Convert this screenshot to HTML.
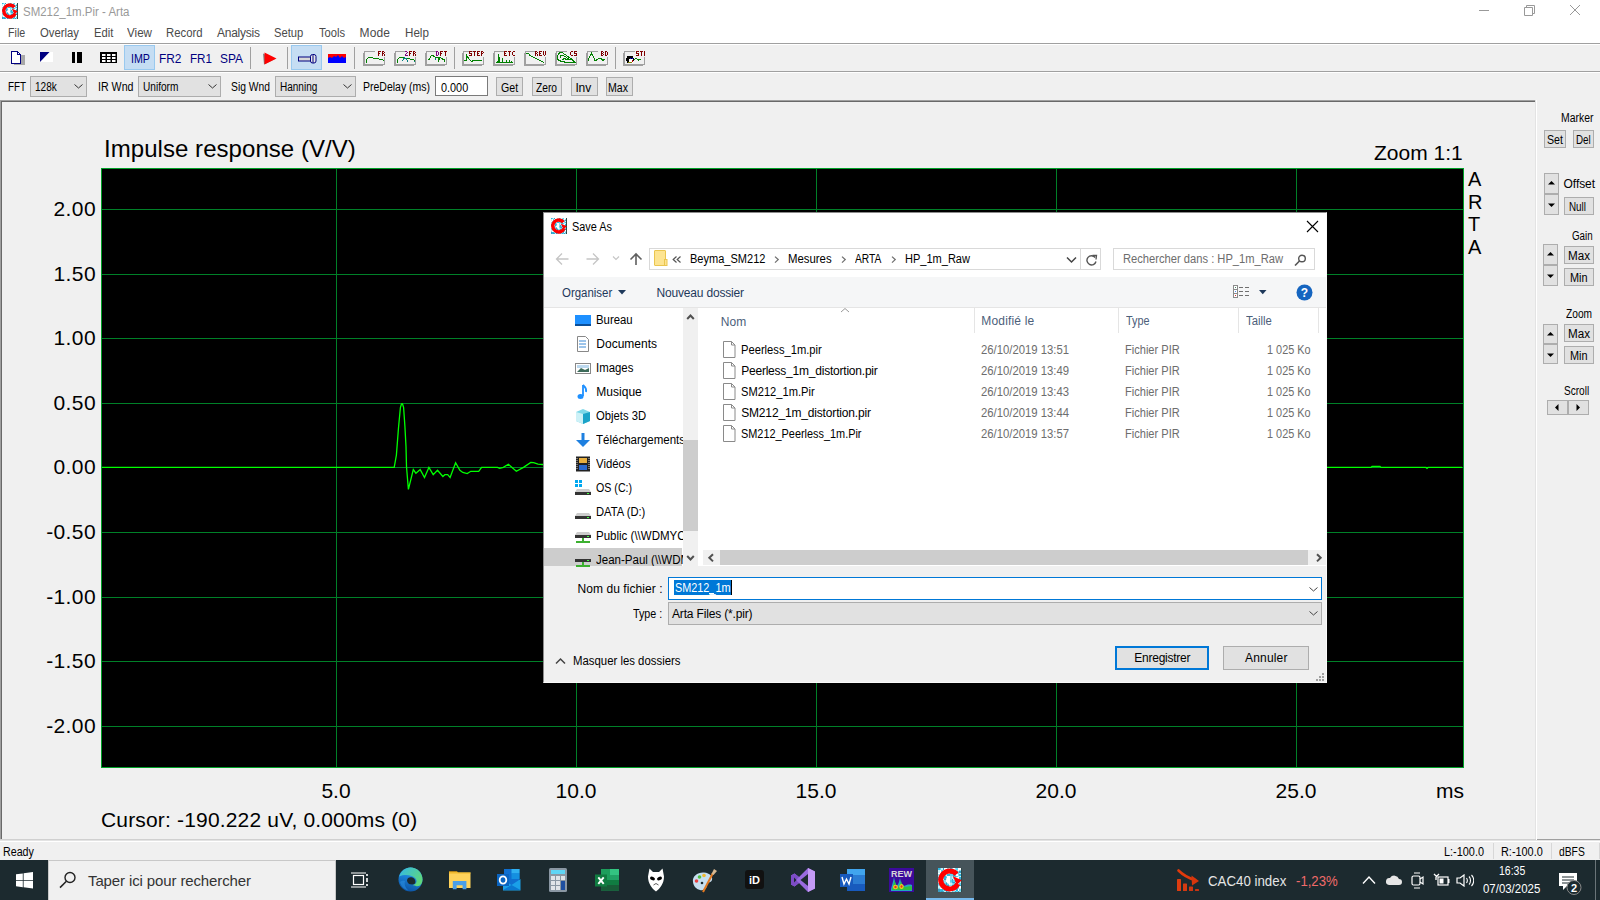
<!DOCTYPE html>
<html><head><meta charset="utf-8"><title>Arta</title><style>
*{box-sizing:border-box;margin:0;padding:0}
html,body{width:1600px;height:900px;overflow:hidden;background:#f0f0f0;font-family:"Liberation Sans",sans-serif;position:relative}
.a{position:absolute;white-space:nowrap}
.ui{font-size:12px;color:#000}
.btn{position:absolute;background:#e1e1e1;border:1px solid #adadad;font-size:12px;text-align:center;color:#000;white-space:nowrap}
.combo{position:absolute;background:#e1e1e1;border:1px solid #adadad;font-size:12px;color:#000;white-space:nowrap}
.pl{font-size:21px;color:#000;position:absolute;white-space:nowrap;line-height:24px}
.r{position:absolute}
</style></head><body>
<div class="r" style="left:0px;top:0px;width:1600px;height:43px;background:#fff;"></div>
<svg class="a" style="left:2px;top:3px;" width="16" height="16" viewBox="0 0 16 16"><g transform="scale(1.0)" shape-rendering="crispEdges"><rect x="0" y="0" width="1" height="1" fill="#2fb8e0"/><rect x="1" y="0" width="1" height="1" fill="#5fd3ee"/><rect x="2" y="0" width="1" height="1" fill="#c9f0f8"/><rect x="3" y="0" width="1" height="1" fill="#3a9cc0"/><rect x="4" y="0" width="1" height="1" fill="#ffffff"/><rect x="5" y="0" width="1" height="1" fill="#ffffff"/><rect x="6" y="0" width="1" height="1" fill="#8fdcec"/><rect x="7" y="0" width="1" height="1" fill="#ffffff"/><rect x="8" y="0" width="1" height="1" fill="#2fb8e0"/><rect x="9" y="0" width="1" height="1" fill="#8fdcec"/><rect x="10" y="0" width="1" height="1" fill="#ffffff"/><rect x="11" y="0" width="1" height="1" fill="#8fdcec"/><rect x="12" y="0" width="1" height="1" fill="#5fd3ee"/><rect x="13" y="0" width="1" height="1" fill="#ffffff"/><rect x="14" y="0" width="1" height="1" fill="#ffffff"/><rect x="15" y="0" width="1" height="1" fill="#c9f0f8"/><rect x="0" y="1" width="1" height="1" fill="#c9f0f8"/><rect x="1" y="1" width="1" height="1" fill="#ffffff"/><rect x="2" y="1" width="1" height="1" fill="#5fd3ee"/><rect x="3" y="1" width="1" height="1" fill="#ffffff"/><rect x="4" y="1" width="1" height="1" fill="#8fdcec"/><rect x="5" y="1" width="1" height="1" fill="#c9f0f8"/><rect x="6" y="1" width="1" height="1" fill="#ffffff"/><rect x="7" y="1" width="1" height="1" fill="#8fdcec"/><rect x="8" y="1" width="1" height="1" fill="#ffffff"/><rect x="9" y="1" width="1" height="1" fill="#5fd3ee"/><rect x="10" y="1" width="1" height="1" fill="#3a9cc0"/><rect x="11" y="1" width="1" height="1" fill="#3a9cc0"/><rect x="12" y="1" width="1" height="1" fill="#8fdcec"/><rect x="13" y="1" width="1" height="1" fill="#ffffff"/><rect x="14" y="1" width="1" height="1" fill="#8fdcec"/><rect x="15" y="1" width="1" height="1" fill="#8fdcec"/><rect x="0" y="2" width="1" height="1" fill="#c9f0f8"/><rect x="1" y="2" width="1" height="1" fill="#ffffff"/><rect x="2" y="2" width="1" height="1" fill="#5fd3ee"/><rect x="3" y="2" width="1" height="1" fill="#ffffff"/><rect x="4" y="2" width="1" height="1" fill="#8fdcec"/><rect x="5" y="2" width="1" height="1" fill="#5fd3ee"/><rect x="6" y="2" width="1" height="1" fill="#2fb8e0"/><rect x="7" y="2" width="1" height="1" fill="#c9f0f8"/><rect x="8" y="2" width="1" height="1" fill="#5fd3ee"/><rect x="9" y="2" width="1" height="1" fill="#8fdcec"/><rect x="10" y="2" width="1" height="1" fill="#ffffff"/><rect x="11" y="2" width="1" height="1" fill="#8fdcec"/><rect x="12" y="2" width="1" height="1" fill="#2fb8e0"/><rect x="13" y="2" width="1" height="1" fill="#8fdcec"/><rect x="14" y="2" width="1" height="1" fill="#3a9cc0"/><rect x="15" y="2" width="1" height="1" fill="#5fd3ee"/><rect x="0" y="3" width="1" height="1" fill="#ffffff"/><rect x="1" y="3" width="1" height="1" fill="#8fdcec"/><rect x="2" y="3" width="1" height="1" fill="#8fdcec"/><rect x="3" y="3" width="1" height="1" fill="#3a9cc0"/><rect x="4" y="3" width="1" height="1" fill="#5fd3ee"/><rect x="5" y="3" width="1" height="1" fill="#2fb8e0"/><rect x="6" y="3" width="1" height="1" fill="#ffffff"/><rect x="7" y="3" width="1" height="1" fill="#8fdcec"/><rect x="8" y="3" width="1" height="1" fill="#3a9cc0"/><rect x="9" y="3" width="1" height="1" fill="#ffffff"/><rect x="10" y="3" width="1" height="1" fill="#8fdcec"/><rect x="11" y="3" width="1" height="1" fill="#ffffff"/><rect x="12" y="3" width="1" height="1" fill="#8fdcec"/><rect x="13" y="3" width="1" height="1" fill="#5fd3ee"/><rect x="14" y="3" width="1" height="1" fill="#c9f0f8"/><rect x="15" y="3" width="1" height="1" fill="#3a9cc0"/><rect x="0" y="4" width="1" height="1" fill="#8fdcec"/><rect x="1" y="4" width="1" height="1" fill="#c9f0f8"/><rect x="2" y="4" width="1" height="1" fill="#2fb8e0"/><rect x="3" y="4" width="1" height="1" fill="#c9f0f8"/><rect x="4" y="4" width="1" height="1" fill="#8fdcec"/><rect x="5" y="4" width="1" height="1" fill="#c9f0f8"/><rect x="6" y="4" width="1" height="1" fill="#2fb8e0"/><rect x="7" y="4" width="1" height="1" fill="#2fb8e0"/><rect x="8" y="4" width="1" height="1" fill="#5fd3ee"/><rect x="9" y="4" width="1" height="1" fill="#5fd3ee"/><rect x="10" y="4" width="1" height="1" fill="#3a9cc0"/><rect x="11" y="4" width="1" height="1" fill="#5fd3ee"/><rect x="12" y="4" width="1" height="1" fill="#ffffff"/><rect x="13" y="4" width="1" height="1" fill="#8fdcec"/><rect x="14" y="4" width="1" height="1" fill="#2fb8e0"/><rect x="15" y="4" width="1" height="1" fill="#8fdcec"/><rect x="0" y="5" width="1" height="1" fill="#c9f0f8"/><rect x="1" y="5" width="1" height="1" fill="#2fb8e0"/><rect x="2" y="5" width="1" height="1" fill="#3a9cc0"/><rect x="3" y="5" width="1" height="1" fill="#c9f0f8"/><rect x="4" y="5" width="1" height="1" fill="#2fb8e0"/><rect x="5" y="5" width="1" height="1" fill="#8fdcec"/><rect x="6" y="5" width="1" height="1" fill="#ffffff"/><rect x="7" y="5" width="1" height="1" fill="#ffffff"/><rect x="8" y="5" width="1" height="1" fill="#8fdcec"/><rect x="9" y="5" width="1" height="1" fill="#c9f0f8"/><rect x="10" y="5" width="1" height="1" fill="#5fd3ee"/><rect x="11" y="5" width="1" height="1" fill="#2fb8e0"/><rect x="12" y="5" width="1" height="1" fill="#5fd3ee"/><rect x="13" y="5" width="1" height="1" fill="#c9f0f8"/><rect x="14" y="5" width="1" height="1" fill="#c9f0f8"/><rect x="15" y="5" width="1" height="1" fill="#ffffff"/><rect x="0" y="6" width="1" height="1" fill="#3a9cc0"/><rect x="1" y="6" width="1" height="1" fill="#ffffff"/><rect x="2" y="6" width="1" height="1" fill="#8fdcec"/><rect x="3" y="6" width="1" height="1" fill="#8fdcec"/><rect x="4" y="6" width="1" height="1" fill="#2fb8e0"/><rect x="5" y="6" width="1" height="1" fill="#2fb8e0"/><rect x="6" y="6" width="1" height="1" fill="#3a9cc0"/><rect x="7" y="6" width="1" height="1" fill="#2fb8e0"/><rect x="8" y="6" width="1" height="1" fill="#8fdcec"/><rect x="9" y="6" width="1" height="1" fill="#c9f0f8"/><rect x="10" y="6" width="1" height="1" fill="#8fdcec"/><rect x="11" y="6" width="1" height="1" fill="#c9f0f8"/><rect x="12" y="6" width="1" height="1" fill="#ffffff"/><rect x="13" y="6" width="1" height="1" fill="#ffffff"/><rect x="14" y="6" width="1" height="1" fill="#2fb8e0"/><rect x="15" y="6" width="1" height="1" fill="#c9f0f8"/><rect x="0" y="7" width="1" height="1" fill="#3a9cc0"/><rect x="1" y="7" width="1" height="1" fill="#3a9cc0"/><rect x="2" y="7" width="1" height="1" fill="#ffffff"/><rect x="3" y="7" width="1" height="1" fill="#ffffff"/><rect x="4" y="7" width="1" height="1" fill="#3a9cc0"/><rect x="5" y="7" width="1" height="1" fill="#3a9cc0"/><rect x="6" y="7" width="1" height="1" fill="#2fb8e0"/><rect x="7" y="7" width="1" height="1" fill="#3a9cc0"/><rect x="8" y="7" width="1" height="1" fill="#8fdcec"/><rect x="9" y="7" width="1" height="1" fill="#3a9cc0"/><rect x="10" y="7" width="1" height="1" fill="#c9f0f8"/><rect x="11" y="7" width="1" height="1" fill="#2fb8e0"/><rect x="12" y="7" width="1" height="1" fill="#3a9cc0"/><rect x="13" y="7" width="1" height="1" fill="#c9f0f8"/><rect x="14" y="7" width="1" height="1" fill="#3a9cc0"/><rect x="15" y="7" width="1" height="1" fill="#2fb8e0"/><rect x="0" y="8" width="1" height="1" fill="#ffffff"/><rect x="1" y="8" width="1" height="1" fill="#c9f0f8"/><rect x="2" y="8" width="1" height="1" fill="#2fb8e0"/><rect x="3" y="8" width="1" height="1" fill="#5fd3ee"/><rect x="4" y="8" width="1" height="1" fill="#8fdcec"/><rect x="5" y="8" width="1" height="1" fill="#ffffff"/><rect x="6" y="8" width="1" height="1" fill="#c9f0f8"/><rect x="7" y="8" width="1" height="1" fill="#ffffff"/><rect x="8" y="8" width="1" height="1" fill="#5fd3ee"/><rect x="9" y="8" width="1" height="1" fill="#2fb8e0"/><rect x="10" y="8" width="1" height="1" fill="#5fd3ee"/><rect x="11" y="8" width="1" height="1" fill="#3a9cc0"/><rect x="12" y="8" width="1" height="1" fill="#5fd3ee"/><rect x="13" y="8" width="1" height="1" fill="#c9f0f8"/><rect x="14" y="8" width="1" height="1" fill="#c9f0f8"/><rect x="15" y="8" width="1" height="1" fill="#c9f0f8"/><rect x="0" y="9" width="1" height="1" fill="#ffffff"/><rect x="1" y="9" width="1" height="1" fill="#5fd3ee"/><rect x="2" y="9" width="1" height="1" fill="#c9f0f8"/><rect x="3" y="9" width="1" height="1" fill="#c9f0f8"/><rect x="4" y="9" width="1" height="1" fill="#8fdcec"/><rect x="5" y="9" width="1" height="1" fill="#2fb8e0"/><rect x="6" y="9" width="1" height="1" fill="#5fd3ee"/><rect x="7" y="9" width="1" height="1" fill="#c9f0f8"/><rect x="8" y="9" width="1" height="1" fill="#8fdcec"/><rect x="9" y="9" width="1" height="1" fill="#2fb8e0"/><rect x="10" y="9" width="1" height="1" fill="#3a9cc0"/><rect x="11" y="9" width="1" height="1" fill="#c9f0f8"/><rect x="12" y="9" width="1" height="1" fill="#2fb8e0"/><rect x="13" y="9" width="1" height="1" fill="#3a9cc0"/><rect x="14" y="9" width="1" height="1" fill="#c9f0f8"/><rect x="15" y="9" width="1" height="1" fill="#5fd3ee"/><rect x="0" y="10" width="1" height="1" fill="#5fd3ee"/><rect x="1" y="10" width="1" height="1" fill="#ffffff"/><rect x="2" y="10" width="1" height="1" fill="#5fd3ee"/><rect x="3" y="10" width="1" height="1" fill="#5fd3ee"/><rect x="4" y="10" width="1" height="1" fill="#5fd3ee"/><rect x="5" y="10" width="1" height="1" fill="#3a9cc0"/><rect x="6" y="10" width="1" height="1" fill="#5fd3ee"/><rect x="7" y="10" width="1" height="1" fill="#ffffff"/><rect x="8" y="10" width="1" height="1" fill="#c9f0f8"/><rect x="9" y="10" width="1" height="1" fill="#8fdcec"/><rect x="10" y="10" width="1" height="1" fill="#5fd3ee"/><rect x="11" y="10" width="1" height="1" fill="#2fb8e0"/><rect x="12" y="10" width="1" height="1" fill="#2fb8e0"/><rect x="13" y="10" width="1" height="1" fill="#ffffff"/><rect x="14" y="10" width="1" height="1" fill="#5fd3ee"/><rect x="15" y="10" width="1" height="1" fill="#c9f0f8"/><rect x="0" y="11" width="1" height="1" fill="#8fdcec"/><rect x="1" y="11" width="1" height="1" fill="#2fb8e0"/><rect x="2" y="11" width="1" height="1" fill="#8fdcec"/><rect x="3" y="11" width="1" height="1" fill="#8fdcec"/><rect x="4" y="11" width="1" height="1" fill="#2fb8e0"/><rect x="5" y="11" width="1" height="1" fill="#5fd3ee"/><rect x="6" y="11" width="1" height="1" fill="#3a9cc0"/><rect x="7" y="11" width="1" height="1" fill="#8fdcec"/><rect x="8" y="11" width="1" height="1" fill="#8fdcec"/><rect x="9" y="11" width="1" height="1" fill="#3a9cc0"/><rect x="10" y="11" width="1" height="1" fill="#3a9cc0"/><rect x="11" y="11" width="1" height="1" fill="#3a9cc0"/><rect x="12" y="11" width="1" height="1" fill="#ffffff"/><rect x="13" y="11" width="1" height="1" fill="#c9f0f8"/><rect x="14" y="11" width="1" height="1" fill="#3a9cc0"/><rect x="15" y="11" width="1" height="1" fill="#8fdcec"/><rect x="0" y="12" width="1" height="1" fill="#c9f0f8"/><rect x="1" y="12" width="1" height="1" fill="#c9f0f8"/><rect x="2" y="12" width="1" height="1" fill="#c9f0f8"/><rect x="3" y="12" width="1" height="1" fill="#c9f0f8"/><rect x="4" y="12" width="1" height="1" fill="#ffffff"/><rect x="5" y="12" width="1" height="1" fill="#c9f0f8"/><rect x="6" y="12" width="1" height="1" fill="#3a9cc0"/><rect x="7" y="12" width="1" height="1" fill="#c9f0f8"/><rect x="8" y="12" width="1" height="1" fill="#ffffff"/><rect x="9" y="12" width="1" height="1" fill="#5fd3ee"/><rect x="10" y="12" width="1" height="1" fill="#ffffff"/><rect x="11" y="12" width="1" height="1" fill="#5fd3ee"/><rect x="12" y="12" width="1" height="1" fill="#c9f0f8"/><rect x="13" y="12" width="1" height="1" fill="#5fd3ee"/><rect x="14" y="12" width="1" height="1" fill="#ffffff"/><rect x="15" y="12" width="1" height="1" fill="#2fb8e0"/><rect x="0" y="13" width="1" height="1" fill="#8fdcec"/><rect x="1" y="13" width="1" height="1" fill="#ffffff"/><rect x="2" y="13" width="1" height="1" fill="#ffffff"/><rect x="3" y="13" width="1" height="1" fill="#ffffff"/><rect x="4" y="13" width="1" height="1" fill="#8fdcec"/><rect x="5" y="13" width="1" height="1" fill="#5fd3ee"/><rect x="6" y="13" width="1" height="1" fill="#8fdcec"/><rect x="7" y="13" width="1" height="1" fill="#ffffff"/><rect x="8" y="13" width="1" height="1" fill="#2fb8e0"/><rect x="9" y="13" width="1" height="1" fill="#8fdcec"/><rect x="10" y="13" width="1" height="1" fill="#ffffff"/><rect x="11" y="13" width="1" height="1" fill="#ffffff"/><rect x="12" y="13" width="1" height="1" fill="#5fd3ee"/><rect x="13" y="13" width="1" height="1" fill="#8fdcec"/><rect x="14" y="13" width="1" height="1" fill="#c9f0f8"/><rect x="15" y="13" width="1" height="1" fill="#5fd3ee"/><rect x="0" y="14" width="1" height="1" fill="#3a9cc0"/><rect x="1" y="14" width="1" height="1" fill="#2fb8e0"/><rect x="2" y="14" width="1" height="1" fill="#2fb8e0"/><rect x="3" y="14" width="1" height="1" fill="#8fdcec"/><rect x="4" y="14" width="1" height="1" fill="#2fb8e0"/><rect x="5" y="14" width="1" height="1" fill="#c9f0f8"/><rect x="6" y="14" width="1" height="1" fill="#ffffff"/><rect x="7" y="14" width="1" height="1" fill="#ffffff"/><rect x="8" y="14" width="1" height="1" fill="#c9f0f8"/><rect x="9" y="14" width="1" height="1" fill="#c9f0f8"/><rect x="10" y="14" width="1" height="1" fill="#c9f0f8"/><rect x="11" y="14" width="1" height="1" fill="#c9f0f8"/><rect x="12" y="14" width="1" height="1" fill="#2fb8e0"/><rect x="13" y="14" width="1" height="1" fill="#ffffff"/><rect x="14" y="14" width="1" height="1" fill="#5fd3ee"/><rect x="15" y="14" width="1" height="1" fill="#ffffff"/><rect x="0" y="15" width="1" height="1" fill="#3a9cc0"/><rect x="1" y="15" width="1" height="1" fill="#2fb8e0"/><rect x="2" y="15" width="1" height="1" fill="#3a9cc0"/><rect x="3" y="15" width="1" height="1" fill="#2fb8e0"/><rect x="4" y="15" width="1" height="1" fill="#c9f0f8"/><rect x="5" y="15" width="1" height="1" fill="#3a9cc0"/><rect x="6" y="15" width="1" height="1" fill="#5fd3ee"/><rect x="7" y="15" width="1" height="1" fill="#8fdcec"/><rect x="8" y="15" width="1" height="1" fill="#ffffff"/><rect x="9" y="15" width="1" height="1" fill="#5fd3ee"/><rect x="10" y="15" width="1" height="1" fill="#8fdcec"/><rect x="11" y="15" width="1" height="1" fill="#2fb8e0"/><rect x="12" y="15" width="1" height="1" fill="#5fd3ee"/><rect x="13" y="15" width="1" height="1" fill="#3a9cc0"/><rect x="14" y="15" width="1" height="1" fill="#8fdcec"/><rect x="15" y="15" width="1" height="1" fill="#ffffff"/><rect x="15" y="0" width="1" height="16" fill="#304848"/></g><g transform="scale(1.0)"><path d="M13.2 10.6A6 6 0 1 1 12.4 4.1" fill="none" stroke="#ff0000" stroke-width="3.4"/><path d="M9.8 5.4L15.8 8.2L12.6 11.4z" fill="#ff0000"/><path d="M8 5.4a2.6 2.6 0 0 0 0 5.2z" fill="#fff"/></g></svg>
<div class="a" style="left:23.00px;top:6.11px;font-size:12px;line-height:12px;color:#999;transform-origin:0.00px 0;transform:scaleX(0.9558);">SM212_1m.Pir - Arta</div>
<div class="r" style="left:1479px;top:10px;width:10px;height:1px;background:#999;"></div>
<svg class="a" style="left:1523px;top:4px" width="13" height="12"><path d="M1.5 3.5h8v8h-8z M3.5 3.5v-2h8v8h-2" fill="none" stroke="#999" stroke-width="1"/></svg>
<svg class="a" style="left:1569px;top:4px" width="12" height="12"><path d="M1 1L11 11M11 1L1 11" stroke="#999" stroke-width="1"/></svg>
<div class="a" style="left:7.70px;top:27.11px;font-size:12px;line-height:12px;color:#4a4a4a;transform-origin:0.00px 0;transform:scaleX(0.8903);">File</div>
<div class="a" style="left:39.80px;top:27.11px;font-size:12px;line-height:12px;color:#4a4a4a;transform-origin:0.00px 0;transform:scaleX(0.9410);">Overlay</div>
<div class="a" style="left:93.60px;top:27.11px;font-size:12px;line-height:12px;color:#4a4a4a;transform-origin:0.00px 0;transform:scaleX(0.9324);">Edit</div>
<div class="a" style="left:127.00px;top:27.11px;font-size:12px;line-height:12px;color:#4a4a4a;transform-origin:0.00px 0;transform:scaleX(0.9690);">View</div>
<div class="a" style="left:166.00px;top:27.11px;font-size:12px;line-height:12px;color:#4a4a4a;transform-origin:0.00px 0;transform:scaleX(0.9432);">Record</div>
<div class="a" style="left:217.00px;top:27.11px;font-size:12px;line-height:12px;color:#4a4a4a;letter-spacing:-0.243px;">Analysis</div>
<div class="a" style="left:274.00px;top:27.11px;font-size:12px;line-height:12px;color:#4a4a4a;transform-origin:0.00px 0;transform:scaleX(0.9337);">Setup</div>
<div class="a" style="left:318.50px;top:27.11px;font-size:12px;line-height:12px;color:#4a4a4a;transform-origin:0.00px 0;transform:scaleX(0.9315);">Tools</div>
<div class="a" style="left:359.60px;top:27.11px;font-size:12px;line-height:12px;color:#4a4a4a;letter-spacing:0.100px;">Mode</div>
<div class="a" style="left:404.50px;top:27.11px;font-size:12px;line-height:12px;color:#4a4a4a;transform-origin:0.00px 0;transform:scaleX(0.9692);">Help</div>
<div class="r" style="left:0px;top:43px;width:1600px;height:1px;background:#a0a0a0;"></div>
<div class="r" style="left:0px;top:44px;width:1600px;height:1px;background:#fff;"></div>
<div class="r" style="left:0px;top:71px;width:1600px;height:1px;background:#a0a0a0;"></div>
<div class="r" style="left:0px;top:72px;width:1600px;height:1px;background:#fff;"></div>
<div class="r" style="left:0px;top:100px;width:1536px;height:1px;background:#a0a0a0;"></div>
<div class="r" style="left:0px;top:101px;width:1536px;height:1px;background:#696969;"></div>
<div class="r" style="left:0px;top:101px;width:1px;height:738px;background:#a0a0a0;"></div>
<div class="r" style="left:1px;top:101px;width:1px;height:738px;background:#696969;"></div>
<div class="r" style="left:1535px;top:100px;width:1px;height:740px;background:#e3e3e3;"></div>
<div class="r" style="left:1536px;top:100px;width:1px;height:740px;background:#fff;"></div>
<svg class="a" style="left:11px;top:51px" width="15" height="15" shape-rendering="crispEdges"><rect x="3" y="4" width="11" height="10" fill="#a8a8a8"/><path d="M0.5 0.5h6l3 3v8.5h-9z" fill="#fff" stroke="#000080"/><path d="M6.5 0.5v3h3" fill="none" stroke="#000080"/></svg>
<svg class="a" style="left:40px;top:52px" width="14" height="11"><path d="M0 0h13v10h-13z" fill="#fff"/><path d="M0 0h9.5l-9.5 10z" fill="#000080"/></svg>
<div class="r" style="left:72px;top:52px;width:3px;height:11px;background:#000;"></div>
<div class="r" style="left:77px;top:52px;width:5px;height:11px;background:#000;"></div>
<svg class="a" style="left:100px;top:52px" width="18" height="12"><rect x="0" y="0" width="17" height="11" fill="#000"/><rect x="2" y="2" width="3.5" height="2" fill="#fff"/><rect x="2" y="5" width="3.5" height="2" fill="#fff"/><rect x="2" y="8" width="3.5" height="2" fill="#fff"/><rect x="7" y="2" width="3.5" height="2" fill="#fff"/><rect x="7" y="5" width="3.5" height="2" fill="#fff"/><rect x="7" y="8" width="3.5" height="2" fill="#fff"/><rect x="12" y="2" width="3.5" height="2" fill="#fff"/><rect x="12" y="5" width="3.5" height="2" fill="#fff"/><rect x="12" y="8" width="3.5" height="2" fill="#fff"/></svg>
<div class="r" style="left:124px;top:45px;width:31px;height:25px;background:#c5ddf3;border:1px solid #99c9ef"></div>
<div class="r" style="left:291px;top:45px;width:31px;height:25px;background:#c5ddf3;border:1px solid #99c9ef"></div>
<div class="a" style="left:131.00px;top:52.25px;font-size:13px;line-height:13px;color:#000080;transform-origin:0.00px 0;transform:scaleX(0.8211);">IMP</div>
<div class="a" style="left:158.50px;top:52.25px;font-size:13px;line-height:13px;color:#000080;transform-origin:0.00px 0;transform:scaleX(0.9158);">FR2</div>
<div class="a" style="left:190.00px;top:52.25px;font-size:13px;line-height:13px;color:#000080;transform-origin:0.00px 0;transform:scaleX(0.8954);">FR1</div>
<div class="a" style="left:220.00px;top:52.25px;font-size:13px;line-height:13px;color:#000080;transform-origin:0.00px 0;transform:scaleX(0.9167);">SPA</div>
<div class="r" style="left:250px;top:47px;width:1px;height:22px;background:#a0a0a0;"></div>
<svg class="a" style="left:262px;top:52px" width="15" height="13"><path d="M1 1.5l12 5.5l-11 5.5z" fill="#808080"/><path d="M2.5 0.5l12 6l-12 6z" fill="#f00"/></svg>
<div class="r" style="left:287px;top:47px;width:1px;height:22px;background:#a0a0a0;"></div>
<svg class="a" style="left:298px;top:54px" width="19" height="10"><rect x="0.5" y="3" width="12" height="4" fill="#d8d8d8" stroke="#000080" stroke-width="1"/><rect x="12.5" y="0.5" width="5.5" height="8.5" rx="2" fill="#e8e8e8" stroke="#000080" stroke-width="1"/><path d="M15 1v8" stroke="#000080"/></svg>
<svg class="a" style="left:328px;top:54px" width="19" height="10"><rect x="0" y="0" width="18" height="9" fill="#0000ff"/><path d="M0 0h18v3l-2 1l-2-2l-2 2l-2-3l-2 2l-2-1l-2 2l-2-1l-2 1z" fill="#f00"/></svg>
<div class="r" style="left:354px;top:47px;width:1px;height:22px;background:#a0a0a0;"></div>
<div class="r" style="left:454px;top:47px;width:1px;height:22px;background:#a0a0a0;"></div>
<div class="r" style="left:615px;top:47px;width:1px;height:22px;background:#a0a0a0;"></div>
<svg class="a" style="left:362px;top:49px" width="26" height="18"><g transform="translate(-362,-49)" shape-rendering="crispEdges"><rect x="364" y="51" width="11" height="1" fill="#a0a0a0"/><rect x="364" y="51" width="1" height="14" fill="#a0a0a0"/><rect x="363" y="53" width="1" height="13" fill="#a0a0a0"/><rect x="364" y="64" width="21" height="1" fill="#a0a0a0"/><rect x="363" y="65" width="20" height="1" fill="#a0a0a0"/><rect x="384" y="57" width="1" height="8" fill="#a0a0a0"/><rect x="378" y="51" width="1" height="1" fill="#800000"/><rect x="379" y="51" width="1" height="1" fill="#800000"/><rect x="380" y="51" width="1" height="1" fill="#800000"/><rect x="378" y="52" width="1" height="1" fill="#800000"/><rect x="378" y="53" width="1" height="1" fill="#800000"/><rect x="379" y="53" width="1" height="1" fill="#800000"/><rect x="378" y="54" width="1" height="1" fill="#800000"/><rect x="378" y="55" width="1" height="1" fill="#800000"/><rect x="382" y="51" width="1" height="1" fill="#800000"/><rect x="383" y="51" width="1" height="1" fill="#800000"/><rect x="382" y="52" width="1" height="1" fill="#800000"/><rect x="384" y="52" width="1" height="1" fill="#800000"/><rect x="382" y="53" width="1" height="1" fill="#800000"/><rect x="383" y="53" width="1" height="1" fill="#800000"/><rect x="382" y="54" width="1" height="1" fill="#800000"/><rect x="384" y="54" width="1" height="1" fill="#800000"/><rect x="382" y="55" width="1" height="1" fill="#800000"/><rect x="384" y="55" width="1" height="1" fill="#800000"/><path d="M3.5 14.5V11.5L5.5 9.5H9.5L10.5 10.5H15.5L16.5 11.5H19.5L21 12.5" transform="translate(363,48)" fill="none" stroke="#008000" stroke-width="1"/></g></svg>
<svg class="a" style="left:393px;top:49px" width="26" height="18"><g transform="translate(-393,-49)" shape-rendering="crispEdges"><rect x="395" y="51" width="11" height="1" fill="#a0a0a0"/><rect x="395" y="51" width="1" height="14" fill="#a0a0a0"/><rect x="394" y="53" width="1" height="13" fill="#a0a0a0"/><rect x="395" y="64" width="21" height="1" fill="#a0a0a0"/><rect x="394" y="65" width="20" height="1" fill="#a0a0a0"/><rect x="415" y="57" width="1" height="8" fill="#a0a0a0"/><rect x="405" y="51" width="1" height="1" fill="#800080"/><rect x="406" y="51" width="1" height="1" fill="#800080"/><rect x="407" y="52" width="1" height="1" fill="#800080"/><rect x="406" y="53" width="1" height="1" fill="#800080"/><rect x="405" y="54" width="1" height="1" fill="#800080"/><rect x="405" y="55" width="1" height="1" fill="#800080"/><rect x="406" y="55" width="1" height="1" fill="#800080"/><rect x="407" y="55" width="1" height="1" fill="#800080"/><rect x="409" y="51" width="1" height="1" fill="#800000"/><rect x="410" y="51" width="1" height="1" fill="#800000"/><rect x="411" y="51" width="1" height="1" fill="#800000"/><rect x="409" y="52" width="1" height="1" fill="#800000"/><rect x="409" y="53" width="1" height="1" fill="#800000"/><rect x="410" y="53" width="1" height="1" fill="#800000"/><rect x="409" y="54" width="1" height="1" fill="#800000"/><rect x="409" y="55" width="1" height="1" fill="#800000"/><rect x="413" y="51" width="1" height="1" fill="#800000"/><rect x="414" y="51" width="1" height="1" fill="#800000"/><rect x="413" y="52" width="1" height="1" fill="#800000"/><rect x="415" y="52" width="1" height="1" fill="#800000"/><rect x="413" y="53" width="1" height="1" fill="#800000"/><rect x="414" y="53" width="1" height="1" fill="#800000"/><rect x="413" y="54" width="1" height="1" fill="#800000"/><rect x="415" y="54" width="1" height="1" fill="#800000"/><rect x="413" y="55" width="1" height="1" fill="#800000"/><rect x="415" y="55" width="1" height="1" fill="#800000"/><path d="M3.5 14.5V11.5L5.5 9.5H9.5L10.5 10.5H15.5L16.5 11.5H19.5L21 12.5" transform="translate(394,48)" fill="none" stroke="#008000" stroke-width="1"/><path d="M7.5 13.5L9.5 11.5L10.5 9.5L12 10.5L14 13.5M20.5 12.5V13.5" transform="translate(394,48)" fill="none" stroke="#008080" stroke-width="1"/></g></svg>
<svg class="a" style="left:424px;top:49px" width="26" height="18"><g transform="translate(-424,-49)" shape-rendering="crispEdges"><rect x="426" y="51" width="11" height="1" fill="#a0a0a0"/><rect x="426" y="51" width="1" height="14" fill="#a0a0a0"/><rect x="425" y="53" width="1" height="13" fill="#a0a0a0"/><rect x="426" y="64" width="21" height="1" fill="#a0a0a0"/><rect x="425" y="65" width="20" height="1" fill="#a0a0a0"/><rect x="446" y="57" width="1" height="8" fill="#a0a0a0"/><rect x="436" y="51" width="1" height="1" fill="#800080"/><rect x="437" y="51" width="1" height="1" fill="#800080"/><rect x="436" y="52" width="1" height="1" fill="#800080"/><rect x="438" y="52" width="1" height="1" fill="#800080"/><rect x="436" y="53" width="1" height="1" fill="#800080"/><rect x="438" y="53" width="1" height="1" fill="#800080"/><rect x="436" y="54" width="1" height="1" fill="#800080"/><rect x="438" y="54" width="1" height="1" fill="#800080"/><rect x="436" y="55" width="1" height="1" fill="#800080"/><rect x="437" y="55" width="1" height="1" fill="#800080"/><rect x="440" y="51" width="1" height="1" fill="#800000"/><rect x="441" y="51" width="1" height="1" fill="#800000"/><rect x="442" y="51" width="1" height="1" fill="#800000"/><rect x="440" y="52" width="1" height="1" fill="#800000"/><rect x="440" y="53" width="1" height="1" fill="#800000"/><rect x="441" y="53" width="1" height="1" fill="#800000"/><rect x="440" y="54" width="1" height="1" fill="#800000"/><rect x="440" y="55" width="1" height="1" fill="#800000"/><rect x="444" y="51" width="1" height="1" fill="#800000"/><rect x="445" y="51" width="1" height="1" fill="#800000"/><rect x="446" y="51" width="1" height="1" fill="#800000"/><rect x="445" y="52" width="1" height="1" fill="#800000"/><rect x="445" y="53" width="1" height="1" fill="#800000"/><rect x="445" y="54" width="1" height="1" fill="#800000"/><rect x="445" y="55" width="1" height="1" fill="#800000"/><path d="M3.5 12.5L6 8L8 7.5L10 9L10.5 9.5L13 9.5L13.5 12.5L15 9.5L17.5 11L19 11L19.5 13L18.5 14.5" transform="translate(425,48)" fill="none" stroke="#008000" stroke-width="1"/><path d="M10.5 9.5V12" transform="translate(425,48)" fill="none" stroke="#008080" stroke-width="1"/></g></svg>
<svg class="a" style="left:461px;top:49px" width="26" height="18"><g transform="translate(-461,-49)" shape-rendering="crispEdges"><rect x="463" y="51" width="11" height="1" fill="#a0a0a0"/><rect x="463" y="51" width="1" height="14" fill="#a0a0a0"/><rect x="462" y="53" width="1" height="13" fill="#a0a0a0"/><rect x="463" y="64" width="21" height="1" fill="#a0a0a0"/><rect x="462" y="65" width="20" height="1" fill="#a0a0a0"/><rect x="483" y="57" width="1" height="8" fill="#a0a0a0"/><rect x="469" y="51" width="1" height="1" fill="#800000"/><rect x="470" y="51" width="1" height="1" fill="#800000"/><rect x="471" y="51" width="1" height="1" fill="#800000"/><rect x="469" y="52" width="1" height="1" fill="#800000"/><rect x="469" y="53" width="1" height="1" fill="#800000"/><rect x="470" y="53" width="1" height="1" fill="#800000"/><rect x="471" y="53" width="1" height="1" fill="#800000"/><rect x="471" y="54" width="1" height="1" fill="#800000"/><rect x="469" y="55" width="1" height="1" fill="#800000"/><rect x="470" y="55" width="1" height="1" fill="#800000"/><rect x="471" y="55" width="1" height="1" fill="#800000"/><rect x="473" y="51" width="1" height="1" fill="#800000"/><rect x="474" y="51" width="1" height="1" fill="#800000"/><rect x="475" y="51" width="1" height="1" fill="#800000"/><rect x="474" y="52" width="1" height="1" fill="#800000"/><rect x="474" y="53" width="1" height="1" fill="#800000"/><rect x="474" y="54" width="1" height="1" fill="#800000"/><rect x="474" y="55" width="1" height="1" fill="#800000"/><rect x="477" y="51" width="1" height="1" fill="#800000"/><rect x="478" y="51" width="1" height="1" fill="#800000"/><rect x="479" y="51" width="1" height="1" fill="#800000"/><rect x="477" y="52" width="1" height="1" fill="#800000"/><rect x="477" y="53" width="1" height="1" fill="#800000"/><rect x="478" y="53" width="1" height="1" fill="#800000"/><rect x="477" y="54" width="1" height="1" fill="#800000"/><rect x="477" y="55" width="1" height="1" fill="#800000"/><rect x="478" y="55" width="1" height="1" fill="#800000"/><rect x="479" y="55" width="1" height="1" fill="#800000"/><rect x="481" y="51" width="1" height="1" fill="#800000"/><rect x="482" y="51" width="1" height="1" fill="#800000"/><rect x="481" y="52" width="1" height="1" fill="#800000"/><rect x="483" y="52" width="1" height="1" fill="#800000"/><rect x="481" y="53" width="1" height="1" fill="#800000"/><rect x="482" y="53" width="1" height="1" fill="#800000"/><rect x="481" y="54" width="1" height="1" fill="#800000"/><rect x="481" y="55" width="1" height="1" fill="#800000"/><path d="M2 12.5H4.5V6M4.5 7.5L6 9.5L7.5 11.5L9 13H10.5L11.5 12.5H19.5" transform="translate(462,48)" fill="none" stroke="#008000" stroke-width="1"/></g></svg>
<svg class="a" style="left:492px;top:49px" width="26" height="18"><g transform="translate(-492,-49)" shape-rendering="crispEdges"><rect x="494" y="51" width="11" height="1" fill="#a0a0a0"/><rect x="494" y="51" width="1" height="14" fill="#a0a0a0"/><rect x="493" y="53" width="1" height="13" fill="#a0a0a0"/><rect x="494" y="64" width="21" height="1" fill="#a0a0a0"/><rect x="493" y="65" width="20" height="1" fill="#a0a0a0"/><rect x="514" y="57" width="1" height="8" fill="#a0a0a0"/><rect x="504" y="51" width="1" height="1" fill="#800000"/><rect x="505" y="51" width="1" height="1" fill="#800000"/><rect x="506" y="51" width="1" height="1" fill="#800000"/><rect x="504" y="52" width="1" height="1" fill="#800000"/><rect x="504" y="53" width="1" height="1" fill="#800000"/><rect x="505" y="53" width="1" height="1" fill="#800000"/><rect x="504" y="54" width="1" height="1" fill="#800000"/><rect x="504" y="55" width="1" height="1" fill="#800000"/><rect x="505" y="55" width="1" height="1" fill="#800000"/><rect x="506" y="55" width="1" height="1" fill="#800000"/><rect x="508" y="51" width="1" height="1" fill="#800000"/><rect x="509" y="51" width="1" height="1" fill="#800000"/><rect x="510" y="51" width="1" height="1" fill="#800000"/><rect x="509" y="52" width="1" height="1" fill="#800000"/><rect x="509" y="53" width="1" height="1" fill="#800000"/><rect x="509" y="54" width="1" height="1" fill="#800000"/><rect x="509" y="55" width="1" height="1" fill="#800000"/><rect x="513" y="51" width="1" height="1" fill="#800000"/><rect x="514" y="51" width="1" height="1" fill="#800000"/><rect x="512" y="52" width="1" height="1" fill="#800000"/><rect x="512" y="53" width="1" height="1" fill="#800000"/><rect x="512" y="54" width="1" height="1" fill="#800000"/><rect x="513" y="55" width="1" height="1" fill="#800000"/><rect x="514" y="55" width="1" height="1" fill="#800000"/><path d="M3 14.5H20M5.5 14.5V5.5M6.5 14.5V9M9.5 14.5V9.5M13.5 14.5V12M16.5 14.5V11.5M18.5 14.5V13M4.5 14L5.5 12" transform="translate(493,48)" fill="none" stroke="#008000" stroke-width="1"/></g></svg>
<svg class="a" style="left:523px;top:49px" width="26" height="18"><g transform="translate(-523,-49)" shape-rendering="crispEdges"><rect x="525" y="51" width="11" height="1" fill="#a0a0a0"/><rect x="525" y="51" width="1" height="14" fill="#a0a0a0"/><rect x="524" y="53" width="1" height="13" fill="#a0a0a0"/><rect x="525" y="64" width="21" height="1" fill="#a0a0a0"/><rect x="524" y="65" width="20" height="1" fill="#a0a0a0"/><rect x="545" y="57" width="1" height="8" fill="#a0a0a0"/><rect x="535" y="51" width="1" height="1" fill="#800000"/><rect x="536" y="51" width="1" height="1" fill="#800000"/><rect x="535" y="52" width="1" height="1" fill="#800000"/><rect x="537" y="52" width="1" height="1" fill="#800000"/><rect x="535" y="53" width="1" height="1" fill="#800000"/><rect x="536" y="53" width="1" height="1" fill="#800000"/><rect x="535" y="54" width="1" height="1" fill="#800000"/><rect x="537" y="54" width="1" height="1" fill="#800000"/><rect x="535" y="55" width="1" height="1" fill="#800000"/><rect x="537" y="55" width="1" height="1" fill="#800000"/><rect x="539" y="51" width="1" height="1" fill="#800000"/><rect x="540" y="51" width="1" height="1" fill="#800000"/><rect x="541" y="51" width="1" height="1" fill="#800000"/><rect x="539" y="52" width="1" height="1" fill="#800000"/><rect x="539" y="53" width="1" height="1" fill="#800000"/><rect x="540" y="53" width="1" height="1" fill="#800000"/><rect x="539" y="54" width="1" height="1" fill="#800000"/><rect x="539" y="55" width="1" height="1" fill="#800000"/><rect x="540" y="55" width="1" height="1" fill="#800000"/><rect x="541" y="55" width="1" height="1" fill="#800000"/><rect x="543" y="51" width="1" height="1" fill="#800000"/><rect x="545" y="51" width="1" height="1" fill="#800000"/><rect x="543" y="52" width="1" height="1" fill="#800000"/><rect x="545" y="52" width="1" height="1" fill="#800000"/><rect x="543" y="53" width="1" height="1" fill="#800000"/><rect x="545" y="53" width="1" height="1" fill="#800000"/><rect x="543" y="54" width="1" height="1" fill="#800000"/><rect x="545" y="54" width="1" height="1" fill="#800000"/><rect x="544" y="55" width="1" height="1" fill="#800000"/><path d="M2 5.5H4.5L6 7.5L8 8.5L10 9.5L12 10.5L14 11.5L16 12.5L18 13.5L20 14.5" transform="translate(524,48)" fill="none" stroke="#008000" stroke-width="1"/></g></svg>
<svg class="a" style="left:554px;top:49px" width="26" height="18"><g transform="translate(-554,-49)" shape-rendering="crispEdges"><rect x="556" y="51" width="11" height="1" fill="#a0a0a0"/><rect x="556" y="51" width="1" height="14" fill="#a0a0a0"/><rect x="555" y="53" width="1" height="13" fill="#a0a0a0"/><rect x="556" y="64" width="21" height="1" fill="#a0a0a0"/><rect x="555" y="65" width="20" height="1" fill="#a0a0a0"/><rect x="576" y="57" width="1" height="8" fill="#a0a0a0"/><rect x="571" y="51" width="1" height="1" fill="#800000"/><rect x="572" y="51" width="1" height="1" fill="#800000"/><rect x="570" y="52" width="1" height="1" fill="#800000"/><rect x="570" y="53" width="1" height="1" fill="#800000"/><rect x="570" y="54" width="1" height="1" fill="#800000"/><rect x="571" y="55" width="1" height="1" fill="#800000"/><rect x="572" y="55" width="1" height="1" fill="#800000"/><rect x="574" y="51" width="1" height="1" fill="#800000"/><rect x="575" y="51" width="1" height="1" fill="#800000"/><rect x="576" y="51" width="1" height="1" fill="#800000"/><rect x="574" y="52" width="1" height="1" fill="#800000"/><rect x="574" y="53" width="1" height="1" fill="#800000"/><rect x="575" y="53" width="1" height="1" fill="#800000"/><rect x="576" y="53" width="1" height="1" fill="#800000"/><rect x="576" y="54" width="1" height="1" fill="#800000"/><rect x="574" y="55" width="1" height="1" fill="#800000"/><rect x="575" y="55" width="1" height="1" fill="#800000"/><rect x="576" y="55" width="1" height="1" fill="#800000"/><path d="M2.5 10C2.5 6 4 4.5 6 4.5C8 4.5 10 6.5 12 8L16 10.5L19.5 14H9.5C6 13.5 2.5 12 2.5 10Z" transform="translate(555,48)" fill="none" stroke="#008000" stroke-width="1"/><path d="M5 10C5 8 6 7 7.5 7L11 9L15 12M7.5 12L9 10.5L12 11.5H16" transform="translate(555,48)" fill="none" stroke="#008000" stroke-width="1"/></g></svg>
<svg class="a" style="left:585px;top:49px" width="26" height="18"><g transform="translate(-585,-49)" shape-rendering="crispEdges"><rect x="587" y="51" width="11" height="1" fill="#a0a0a0"/><rect x="587" y="51" width="1" height="14" fill="#a0a0a0"/><rect x="586" y="53" width="1" height="13" fill="#a0a0a0"/><rect x="587" y="64" width="21" height="1" fill="#a0a0a0"/><rect x="586" y="65" width="20" height="1" fill="#a0a0a0"/><rect x="607" y="57" width="1" height="8" fill="#a0a0a0"/><rect x="601" y="51" width="1" height="1" fill="#800000"/><rect x="602" y="51" width="1" height="1" fill="#800000"/><rect x="601" y="52" width="1" height="1" fill="#800000"/><rect x="603" y="52" width="1" height="1" fill="#800000"/><rect x="601" y="53" width="1" height="1" fill="#800000"/><rect x="602" y="53" width="1" height="1" fill="#800000"/><rect x="601" y="54" width="1" height="1" fill="#800000"/><rect x="603" y="54" width="1" height="1" fill="#800000"/><rect x="601" y="55" width="1" height="1" fill="#800000"/><rect x="602" y="55" width="1" height="1" fill="#800000"/><rect x="605" y="51" width="1" height="1" fill="#800000"/><rect x="606" y="51" width="1" height="1" fill="#800000"/><rect x="605" y="52" width="1" height="1" fill="#800000"/><rect x="607" y="52" width="1" height="1" fill="#800000"/><rect x="605" y="53" width="1" height="1" fill="#800000"/><rect x="607" y="53" width="1" height="1" fill="#800000"/><rect x="605" y="54" width="1" height="1" fill="#800000"/><rect x="607" y="54" width="1" height="1" fill="#800000"/><rect x="605" y="55" width="1" height="1" fill="#800000"/><rect x="606" y="55" width="1" height="1" fill="#800000"/><path d="M2 12.5L3.5 9L5.5 5.5L7.5 9L9 12.5L10.5 12L12 11L14 10.5L15.5 11L17 12.5L19.5 10.5" transform="translate(586,48)" fill="none" stroke="#008000" stroke-width="1"/></g></svg>
<svg class="a" style="left:622px;top:49px" width="26" height="18"><g transform="translate(-622,-49)" shape-rendering="crispEdges"><rect x="624" y="51" width="11" height="1" fill="#a0a0a0"/><rect x="624" y="51" width="1" height="14" fill="#a0a0a0"/><rect x="623" y="53" width="1" height="13" fill="#a0a0a0"/><rect x="624" y="64" width="21" height="1" fill="#a0a0a0"/><rect x="623" y="65" width="20" height="1" fill="#a0a0a0"/><rect x="644" y="57" width="1" height="8" fill="#a0a0a0"/><rect x="636" y="51" width="1" height="1" fill="#800000"/><rect x="637" y="51" width="1" height="1" fill="#800000"/><rect x="638" y="51" width="1" height="1" fill="#800000"/><rect x="636" y="52" width="1" height="1" fill="#800000"/><rect x="636" y="53" width="1" height="1" fill="#800000"/><rect x="637" y="53" width="1" height="1" fill="#800000"/><rect x="638" y="53" width="1" height="1" fill="#800000"/><rect x="638" y="54" width="1" height="1" fill="#800000"/><rect x="636" y="55" width="1" height="1" fill="#800000"/><rect x="637" y="55" width="1" height="1" fill="#800000"/><rect x="638" y="55" width="1" height="1" fill="#800000"/><rect x="640" y="51" width="1" height="1" fill="#800000"/><rect x="641" y="51" width="1" height="1" fill="#800000"/><rect x="642" y="51" width="1" height="1" fill="#800000"/><rect x="641" y="52" width="1" height="1" fill="#800000"/><rect x="641" y="53" width="1" height="1" fill="#800000"/><rect x="641" y="54" width="1" height="1" fill="#800000"/><rect x="641" y="55" width="1" height="1" fill="#800000"/><rect x="644" y="51" width="1" height="1" fill="#800000"/><rect x="644" y="52" width="1" height="1" fill="#800000"/><rect x="644" y="53" width="1" height="1" fill="#800000"/><rect x="644" y="54" width="1" height="1" fill="#800000"/><rect x="644" y="55" width="1" height="1" fill="#800000"/><path d="M11 12L12.5 10.5L14 11L15.5 12L17 11.5L18.5 10.5" transform="translate(623,48)" fill="none" stroke="#008000" stroke-width="1"/><circle cx="630" cy="59.5" r="3.8" fill="#000"/><path d="M629 58.5h4v4h-4z" fill="#fff"/><path d="M628 62.5h4" stroke="#808000"/><rect x="630" y="58" width="1" height="1" fill="#0000ff"/><rect x="632" y="58" width="1" height="1" fill="#0000ff"/><rect x="632" y="60" width="1" height="2" fill="#c00000"/></g></svg>
<div class="a" style="left:8.40px;top:81.11px;font-size:12px;line-height:12px;color:#000;transform-origin:0.00px 0;transform:scaleX(0.8220);">FFT</div>
<div class="combo" style="left:30px;top:76px;width:57px;height:21px"></div>
<div class="a" style="left:35.00px;top:81.11px;font-size:12px;line-height:12px;color:#000;transform-origin:0.00px 0;transform:scaleX(0.8391);">128k</div>
<svg class="a" style="left:74px;top:84px" width="9" height="5"><path d="M0.5 0.5L4.5 4L8.5 0.5" fill="none" stroke="#333" stroke-width="1"/></svg>
<div class="a" style="left:97.50px;top:81.11px;font-size:12px;line-height:12px;color:#000;transform-origin:0.00px 0;transform:scaleX(0.8871);">IR Wnd</div>
<div class="combo" style="left:138px;top:76px;width:83px;height:21px"></div>
<div class="a" style="left:143.00px;top:81.11px;font-size:12px;line-height:12px;color:#000;transform-origin:0.00px 0;transform:scaleX(0.8429);">Uniform</div>
<svg class="a" style="left:208px;top:84px" width="9" height="5"><path d="M0.5 0.5L4.5 4L8.5 0.5" fill="none" stroke="#333" stroke-width="1"/></svg>
<div class="a" style="left:231.00px;top:81.11px;font-size:12px;line-height:12px;color:#000;transform-origin:0.00px 0;transform:scaleX(0.8598);">Sig Wnd</div>
<div class="combo" style="left:275px;top:76px;width:81px;height:21px"></div>
<div class="a" style="left:280.00px;top:81.11px;font-size:12px;line-height:12px;color:#000;transform-origin:0.00px 0;transform:scaleX(0.8345);">Hanning</div>
<svg class="a" style="left:343px;top:84px" width="9" height="5"><path d="M0.5 0.5L4.5 4L8.5 0.5" fill="none" stroke="#333" stroke-width="1"/></svg>
<div class="a" style="left:363.00px;top:81.11px;font-size:12px;line-height:12px;color:#000;transform-origin:0.00px 0;transform:scaleX(0.8738);">PreDelay (ms)</div>
<div class="r" style="left:435px;top:76px;width:53px;height:20px;background:#fff;border:1px solid #7a7a7a"></div>
<div class="a" style="left:440.80px;top:81.61px;font-size:12px;line-height:12px;color:#000;transform-origin:0.00px 0;transform:scaleX(0.9049);">0.000</div>
<div class="r" style="left:496px;top:77px;width:27px;height:19px;background:#e1e1e1;border:1px solid #adadad"></div>
<div class="a" style="left:500.60px;top:82.31px;font-size:12px;line-height:12px;color:#000;transform-origin:0.00px 0;transform:scaleX(0.8851);">Get</div>
<div class="r" style="left:532px;top:77px;width:30px;height:19px;background:#e1e1e1;border:1px solid #adadad"></div>
<div class="a" style="left:536.00px;top:82.31px;font-size:12px;line-height:12px;color:#000;transform-origin:0.00px 0;transform:scaleX(0.8516);">Zero</div>
<div class="r" style="left:571px;top:77px;width:27px;height:19px;background:#e1e1e1;border:1px solid #adadad"></div>
<div class="a" style="left:575.40px;top:82.31px;font-size:12px;line-height:12px;color:#000;letter-spacing:-0.110px;">Inv</div>
<div class="r" style="left:606px;top:77px;width:27px;height:19px;background:#e1e1e1;border:1px solid #adadad"></div>
<div class="a" style="left:608.20px;top:82.31px;font-size:12px;line-height:12px;color:#000;transform-origin:0.00px 0;transform:scaleX(0.8818);">Max</div>
<svg class="a" style="left:0;top:0" width="1600" height="900"><rect x="101.5" y="168.5" width="1362" height="599" fill="#000" stroke="#00a028" stroke-width="1"/><line x1="102" y1="209.5" x2="1463" y2="209.5" stroke="#008028" stroke-width="1"/><line x1="102" y1="274.5" x2="1463" y2="274.5" stroke="#008028" stroke-width="1"/><line x1="102" y1="338.5" x2="1463" y2="338.5" stroke="#008028" stroke-width="1"/><line x1="102" y1="403.5" x2="1463" y2="403.5" stroke="#008028" stroke-width="1"/><line x1="102" y1="467.5" x2="1463" y2="467.5" stroke="#008028" stroke-width="1"/><line x1="102" y1="532.5" x2="1463" y2="532.5" stroke="#008028" stroke-width="1"/><line x1="102" y1="597.5" x2="1463" y2="597.5" stroke="#008028" stroke-width="1"/><line x1="102" y1="661.5" x2="1463" y2="661.5" stroke="#008028" stroke-width="1"/><line x1="102" y1="726.5" x2="1463" y2="726.5" stroke="#008028" stroke-width="1"/><line x1="336.5" y1="169" x2="336.5" y2="767" stroke="#008028" stroke-width="1"/><line x1="576.5" y1="169" x2="576.5" y2="767" stroke="#008028" stroke-width="1"/><line x1="816.5" y1="169" x2="816.5" y2="767" stroke="#008028" stroke-width="1"/><line x1="1056.5" y1="169" x2="1056.5" y2="767" stroke="#008028" stroke-width="1"/><line x1="1296.5" y1="169" x2="1296.5" y2="767" stroke="#008028" stroke-width="1"/><path d="M102.0 467.4 L394.2 467.4 L396.4 455.1 L398.5 427.7 L400.4 407.5 L401.5 403.8 L402.5 403.8 L403.6 407.5 L404.9 426.2 L406.0 446.5 L406.5 466.7 L408.4 489.4 L413.3 469.6 L415.9 473.2 L420.2 469.6 L424.5 477.5 L428.9 467.4 L433.2 474.7 L437.5 470.3 L442.9 476.5 L444.8 474.7 L447.7 474.7 L450.1 477.5 L455.6 462.7 L459.9 470.3 L462.8 472.5 L467.2 473.6 L470.8 471.3 L478.7 471.3 L481.6 467.4 L497.5 467.4 L499.7 468.4 L503.3 467.4 L508.4 464.2 L516.3 471.3 L523.5 467.4 L530.8 462.4 L533.6 462.6 L538.0 464.2 L542.3 464.5 L600.0 467.4 L1371.0 467.4 L1372.0 466.5 L1380.0 466.5 L1381.0 467.4 L1426.0 467.4 L1427.0 468.3 L1428.0 467.4 L1462.0 467.4" fill="none" stroke="#00ff00" stroke-width="1.3"/></svg>
<div class="pl" style="right:1504px;top:196.5px;letter-spacing:0.4px">2.00</div>
<div class="pl" style="right:1504px;top:261.5px;letter-spacing:0.4px">1.50</div>
<div class="pl" style="right:1504px;top:325.5px;letter-spacing:0.4px">1.00</div>
<div class="pl" style="right:1504px;top:390.5px;letter-spacing:0.4px">0.50</div>
<div class="pl" style="right:1504px;top:454.5px;letter-spacing:0.4px">0.00</div>
<div class="pl" style="right:1504px;top:519.5px;letter-spacing:0.4px">-0.50</div>
<div class="pl" style="right:1504px;top:584.5px;letter-spacing:0.4px">-1.00</div>
<div class="pl" style="right:1504px;top:648.5px;letter-spacing:0.4px">-1.50</div>
<div class="pl" style="right:1504px;top:713.5px;letter-spacing:0.4px">-2.00</div>
<div class="pl" style="left:276px;width:120px;text-align:center;top:779px">5.0</div>
<div class="pl" style="left:516px;width:120px;text-align:center;top:779px">10.0</div>
<div class="pl" style="left:756px;width:120px;text-align:center;top:779px">15.0</div>
<div class="pl" style="left:996px;width:120px;text-align:center;top:779px">20.0</div>
<div class="pl" style="left:1236px;width:120px;text-align:center;top:779px">25.0</div>
<div class="pl" style="left:1436px;top:779px">ms</div>
<div class="pl" style="left:101px;top:808px;letter-spacing:0.17px">Cursor: -190.222 uV, 0.000ms (0)</div>
<div class="pl" style="left:104px;top:137px;font-size:24px;letter-spacing:0.05px">Impulse response (V/V)</div>
<div class="pl" style="left:1374px;top:140.5px">Zoom 1:1</div>
<div class="pl" style="left:1468px;top:168px;line-height:22.6px;font-size:20px">A<br>R<br>T<br>A</div>
<div class="r" style="left:543px;top:212px;width:784px;height:471px;background:#f0f0f0;border:1px solid #8c8c8c;border-right-color:#fafafa;border-bottom-color:#fafafa"></div>
<div class="r" style="left:544px;top:213px;width:782px;height:64px;background:#fff;"></div>
<svg class="a" style="left:551px;top:218px;" width="16" height="16" viewBox="0 0 16 16"><g transform="scale(1.0)" shape-rendering="crispEdges"><rect x="0" y="0" width="1" height="1" fill="#2fb8e0"/><rect x="1" y="0" width="1" height="1" fill="#5fd3ee"/><rect x="2" y="0" width="1" height="1" fill="#c9f0f8"/><rect x="3" y="0" width="1" height="1" fill="#3a9cc0"/><rect x="4" y="0" width="1" height="1" fill="#ffffff"/><rect x="5" y="0" width="1" height="1" fill="#ffffff"/><rect x="6" y="0" width="1" height="1" fill="#8fdcec"/><rect x="7" y="0" width="1" height="1" fill="#ffffff"/><rect x="8" y="0" width="1" height="1" fill="#2fb8e0"/><rect x="9" y="0" width="1" height="1" fill="#8fdcec"/><rect x="10" y="0" width="1" height="1" fill="#ffffff"/><rect x="11" y="0" width="1" height="1" fill="#8fdcec"/><rect x="12" y="0" width="1" height="1" fill="#5fd3ee"/><rect x="13" y="0" width="1" height="1" fill="#ffffff"/><rect x="14" y="0" width="1" height="1" fill="#ffffff"/><rect x="15" y="0" width="1" height="1" fill="#c9f0f8"/><rect x="0" y="1" width="1" height="1" fill="#c9f0f8"/><rect x="1" y="1" width="1" height="1" fill="#ffffff"/><rect x="2" y="1" width="1" height="1" fill="#5fd3ee"/><rect x="3" y="1" width="1" height="1" fill="#ffffff"/><rect x="4" y="1" width="1" height="1" fill="#8fdcec"/><rect x="5" y="1" width="1" height="1" fill="#c9f0f8"/><rect x="6" y="1" width="1" height="1" fill="#ffffff"/><rect x="7" y="1" width="1" height="1" fill="#8fdcec"/><rect x="8" y="1" width="1" height="1" fill="#ffffff"/><rect x="9" y="1" width="1" height="1" fill="#5fd3ee"/><rect x="10" y="1" width="1" height="1" fill="#3a9cc0"/><rect x="11" y="1" width="1" height="1" fill="#3a9cc0"/><rect x="12" y="1" width="1" height="1" fill="#8fdcec"/><rect x="13" y="1" width="1" height="1" fill="#ffffff"/><rect x="14" y="1" width="1" height="1" fill="#8fdcec"/><rect x="15" y="1" width="1" height="1" fill="#8fdcec"/><rect x="0" y="2" width="1" height="1" fill="#c9f0f8"/><rect x="1" y="2" width="1" height="1" fill="#ffffff"/><rect x="2" y="2" width="1" height="1" fill="#5fd3ee"/><rect x="3" y="2" width="1" height="1" fill="#ffffff"/><rect x="4" y="2" width="1" height="1" fill="#8fdcec"/><rect x="5" y="2" width="1" height="1" fill="#5fd3ee"/><rect x="6" y="2" width="1" height="1" fill="#2fb8e0"/><rect x="7" y="2" width="1" height="1" fill="#c9f0f8"/><rect x="8" y="2" width="1" height="1" fill="#5fd3ee"/><rect x="9" y="2" width="1" height="1" fill="#8fdcec"/><rect x="10" y="2" width="1" height="1" fill="#ffffff"/><rect x="11" y="2" width="1" height="1" fill="#8fdcec"/><rect x="12" y="2" width="1" height="1" fill="#2fb8e0"/><rect x="13" y="2" width="1" height="1" fill="#8fdcec"/><rect x="14" y="2" width="1" height="1" fill="#3a9cc0"/><rect x="15" y="2" width="1" height="1" fill="#5fd3ee"/><rect x="0" y="3" width="1" height="1" fill="#ffffff"/><rect x="1" y="3" width="1" height="1" fill="#8fdcec"/><rect x="2" y="3" width="1" height="1" fill="#8fdcec"/><rect x="3" y="3" width="1" height="1" fill="#3a9cc0"/><rect x="4" y="3" width="1" height="1" fill="#5fd3ee"/><rect x="5" y="3" width="1" height="1" fill="#2fb8e0"/><rect x="6" y="3" width="1" height="1" fill="#ffffff"/><rect x="7" y="3" width="1" height="1" fill="#8fdcec"/><rect x="8" y="3" width="1" height="1" fill="#3a9cc0"/><rect x="9" y="3" width="1" height="1" fill="#ffffff"/><rect x="10" y="3" width="1" height="1" fill="#8fdcec"/><rect x="11" y="3" width="1" height="1" fill="#ffffff"/><rect x="12" y="3" width="1" height="1" fill="#8fdcec"/><rect x="13" y="3" width="1" height="1" fill="#5fd3ee"/><rect x="14" y="3" width="1" height="1" fill="#c9f0f8"/><rect x="15" y="3" width="1" height="1" fill="#3a9cc0"/><rect x="0" y="4" width="1" height="1" fill="#8fdcec"/><rect x="1" y="4" width="1" height="1" fill="#c9f0f8"/><rect x="2" y="4" width="1" height="1" fill="#2fb8e0"/><rect x="3" y="4" width="1" height="1" fill="#c9f0f8"/><rect x="4" y="4" width="1" height="1" fill="#8fdcec"/><rect x="5" y="4" width="1" height="1" fill="#c9f0f8"/><rect x="6" y="4" width="1" height="1" fill="#2fb8e0"/><rect x="7" y="4" width="1" height="1" fill="#2fb8e0"/><rect x="8" y="4" width="1" height="1" fill="#5fd3ee"/><rect x="9" y="4" width="1" height="1" fill="#5fd3ee"/><rect x="10" y="4" width="1" height="1" fill="#3a9cc0"/><rect x="11" y="4" width="1" height="1" fill="#5fd3ee"/><rect x="12" y="4" width="1" height="1" fill="#ffffff"/><rect x="13" y="4" width="1" height="1" fill="#8fdcec"/><rect x="14" y="4" width="1" height="1" fill="#2fb8e0"/><rect x="15" y="4" width="1" height="1" fill="#8fdcec"/><rect x="0" y="5" width="1" height="1" fill="#c9f0f8"/><rect x="1" y="5" width="1" height="1" fill="#2fb8e0"/><rect x="2" y="5" width="1" height="1" fill="#3a9cc0"/><rect x="3" y="5" width="1" height="1" fill="#c9f0f8"/><rect x="4" y="5" width="1" height="1" fill="#2fb8e0"/><rect x="5" y="5" width="1" height="1" fill="#8fdcec"/><rect x="6" y="5" width="1" height="1" fill="#ffffff"/><rect x="7" y="5" width="1" height="1" fill="#ffffff"/><rect x="8" y="5" width="1" height="1" fill="#8fdcec"/><rect x="9" y="5" width="1" height="1" fill="#c9f0f8"/><rect x="10" y="5" width="1" height="1" fill="#5fd3ee"/><rect x="11" y="5" width="1" height="1" fill="#2fb8e0"/><rect x="12" y="5" width="1" height="1" fill="#5fd3ee"/><rect x="13" y="5" width="1" height="1" fill="#c9f0f8"/><rect x="14" y="5" width="1" height="1" fill="#c9f0f8"/><rect x="15" y="5" width="1" height="1" fill="#ffffff"/><rect x="0" y="6" width="1" height="1" fill="#3a9cc0"/><rect x="1" y="6" width="1" height="1" fill="#ffffff"/><rect x="2" y="6" width="1" height="1" fill="#8fdcec"/><rect x="3" y="6" width="1" height="1" fill="#8fdcec"/><rect x="4" y="6" width="1" height="1" fill="#2fb8e0"/><rect x="5" y="6" width="1" height="1" fill="#2fb8e0"/><rect x="6" y="6" width="1" height="1" fill="#3a9cc0"/><rect x="7" y="6" width="1" height="1" fill="#2fb8e0"/><rect x="8" y="6" width="1" height="1" fill="#8fdcec"/><rect x="9" y="6" width="1" height="1" fill="#c9f0f8"/><rect x="10" y="6" width="1" height="1" fill="#8fdcec"/><rect x="11" y="6" width="1" height="1" fill="#c9f0f8"/><rect x="12" y="6" width="1" height="1" fill="#ffffff"/><rect x="13" y="6" width="1" height="1" fill="#ffffff"/><rect x="14" y="6" width="1" height="1" fill="#2fb8e0"/><rect x="15" y="6" width="1" height="1" fill="#c9f0f8"/><rect x="0" y="7" width="1" height="1" fill="#3a9cc0"/><rect x="1" y="7" width="1" height="1" fill="#3a9cc0"/><rect x="2" y="7" width="1" height="1" fill="#ffffff"/><rect x="3" y="7" width="1" height="1" fill="#ffffff"/><rect x="4" y="7" width="1" height="1" fill="#3a9cc0"/><rect x="5" y="7" width="1" height="1" fill="#3a9cc0"/><rect x="6" y="7" width="1" height="1" fill="#2fb8e0"/><rect x="7" y="7" width="1" height="1" fill="#3a9cc0"/><rect x="8" y="7" width="1" height="1" fill="#8fdcec"/><rect x="9" y="7" width="1" height="1" fill="#3a9cc0"/><rect x="10" y="7" width="1" height="1" fill="#c9f0f8"/><rect x="11" y="7" width="1" height="1" fill="#2fb8e0"/><rect x="12" y="7" width="1" height="1" fill="#3a9cc0"/><rect x="13" y="7" width="1" height="1" fill="#c9f0f8"/><rect x="14" y="7" width="1" height="1" fill="#3a9cc0"/><rect x="15" y="7" width="1" height="1" fill="#2fb8e0"/><rect x="0" y="8" width="1" height="1" fill="#ffffff"/><rect x="1" y="8" width="1" height="1" fill="#c9f0f8"/><rect x="2" y="8" width="1" height="1" fill="#2fb8e0"/><rect x="3" y="8" width="1" height="1" fill="#5fd3ee"/><rect x="4" y="8" width="1" height="1" fill="#8fdcec"/><rect x="5" y="8" width="1" height="1" fill="#ffffff"/><rect x="6" y="8" width="1" height="1" fill="#c9f0f8"/><rect x="7" y="8" width="1" height="1" fill="#ffffff"/><rect x="8" y="8" width="1" height="1" fill="#5fd3ee"/><rect x="9" y="8" width="1" height="1" fill="#2fb8e0"/><rect x="10" y="8" width="1" height="1" fill="#5fd3ee"/><rect x="11" y="8" width="1" height="1" fill="#3a9cc0"/><rect x="12" y="8" width="1" height="1" fill="#5fd3ee"/><rect x="13" y="8" width="1" height="1" fill="#c9f0f8"/><rect x="14" y="8" width="1" height="1" fill="#c9f0f8"/><rect x="15" y="8" width="1" height="1" fill="#c9f0f8"/><rect x="0" y="9" width="1" height="1" fill="#ffffff"/><rect x="1" y="9" width="1" height="1" fill="#5fd3ee"/><rect x="2" y="9" width="1" height="1" fill="#c9f0f8"/><rect x="3" y="9" width="1" height="1" fill="#c9f0f8"/><rect x="4" y="9" width="1" height="1" fill="#8fdcec"/><rect x="5" y="9" width="1" height="1" fill="#2fb8e0"/><rect x="6" y="9" width="1" height="1" fill="#5fd3ee"/><rect x="7" y="9" width="1" height="1" fill="#c9f0f8"/><rect x="8" y="9" width="1" height="1" fill="#8fdcec"/><rect x="9" y="9" width="1" height="1" fill="#2fb8e0"/><rect x="10" y="9" width="1" height="1" fill="#3a9cc0"/><rect x="11" y="9" width="1" height="1" fill="#c9f0f8"/><rect x="12" y="9" width="1" height="1" fill="#2fb8e0"/><rect x="13" y="9" width="1" height="1" fill="#3a9cc0"/><rect x="14" y="9" width="1" height="1" fill="#c9f0f8"/><rect x="15" y="9" width="1" height="1" fill="#5fd3ee"/><rect x="0" y="10" width="1" height="1" fill="#5fd3ee"/><rect x="1" y="10" width="1" height="1" fill="#ffffff"/><rect x="2" y="10" width="1" height="1" fill="#5fd3ee"/><rect x="3" y="10" width="1" height="1" fill="#5fd3ee"/><rect x="4" y="10" width="1" height="1" fill="#5fd3ee"/><rect x="5" y="10" width="1" height="1" fill="#3a9cc0"/><rect x="6" y="10" width="1" height="1" fill="#5fd3ee"/><rect x="7" y="10" width="1" height="1" fill="#ffffff"/><rect x="8" y="10" width="1" height="1" fill="#c9f0f8"/><rect x="9" y="10" width="1" height="1" fill="#8fdcec"/><rect x="10" y="10" width="1" height="1" fill="#5fd3ee"/><rect x="11" y="10" width="1" height="1" fill="#2fb8e0"/><rect x="12" y="10" width="1" height="1" fill="#2fb8e0"/><rect x="13" y="10" width="1" height="1" fill="#ffffff"/><rect x="14" y="10" width="1" height="1" fill="#5fd3ee"/><rect x="15" y="10" width="1" height="1" fill="#c9f0f8"/><rect x="0" y="11" width="1" height="1" fill="#8fdcec"/><rect x="1" y="11" width="1" height="1" fill="#2fb8e0"/><rect x="2" y="11" width="1" height="1" fill="#8fdcec"/><rect x="3" y="11" width="1" height="1" fill="#8fdcec"/><rect x="4" y="11" width="1" height="1" fill="#2fb8e0"/><rect x="5" y="11" width="1" height="1" fill="#5fd3ee"/><rect x="6" y="11" width="1" height="1" fill="#3a9cc0"/><rect x="7" y="11" width="1" height="1" fill="#8fdcec"/><rect x="8" y="11" width="1" height="1" fill="#8fdcec"/><rect x="9" y="11" width="1" height="1" fill="#3a9cc0"/><rect x="10" y="11" width="1" height="1" fill="#3a9cc0"/><rect x="11" y="11" width="1" height="1" fill="#3a9cc0"/><rect x="12" y="11" width="1" height="1" fill="#ffffff"/><rect x="13" y="11" width="1" height="1" fill="#c9f0f8"/><rect x="14" y="11" width="1" height="1" fill="#3a9cc0"/><rect x="15" y="11" width="1" height="1" fill="#8fdcec"/><rect x="0" y="12" width="1" height="1" fill="#c9f0f8"/><rect x="1" y="12" width="1" height="1" fill="#c9f0f8"/><rect x="2" y="12" width="1" height="1" fill="#c9f0f8"/><rect x="3" y="12" width="1" height="1" fill="#c9f0f8"/><rect x="4" y="12" width="1" height="1" fill="#ffffff"/><rect x="5" y="12" width="1" height="1" fill="#c9f0f8"/><rect x="6" y="12" width="1" height="1" fill="#3a9cc0"/><rect x="7" y="12" width="1" height="1" fill="#c9f0f8"/><rect x="8" y="12" width="1" height="1" fill="#ffffff"/><rect x="9" y="12" width="1" height="1" fill="#5fd3ee"/><rect x="10" y="12" width="1" height="1" fill="#ffffff"/><rect x="11" y="12" width="1" height="1" fill="#5fd3ee"/><rect x="12" y="12" width="1" height="1" fill="#c9f0f8"/><rect x="13" y="12" width="1" height="1" fill="#5fd3ee"/><rect x="14" y="12" width="1" height="1" fill="#ffffff"/><rect x="15" y="12" width="1" height="1" fill="#2fb8e0"/><rect x="0" y="13" width="1" height="1" fill="#8fdcec"/><rect x="1" y="13" width="1" height="1" fill="#ffffff"/><rect x="2" y="13" width="1" height="1" fill="#ffffff"/><rect x="3" y="13" width="1" height="1" fill="#ffffff"/><rect x="4" y="13" width="1" height="1" fill="#8fdcec"/><rect x="5" y="13" width="1" height="1" fill="#5fd3ee"/><rect x="6" y="13" width="1" height="1" fill="#8fdcec"/><rect x="7" y="13" width="1" height="1" fill="#ffffff"/><rect x="8" y="13" width="1" height="1" fill="#2fb8e0"/><rect x="9" y="13" width="1" height="1" fill="#8fdcec"/><rect x="10" y="13" width="1" height="1" fill="#ffffff"/><rect x="11" y="13" width="1" height="1" fill="#ffffff"/><rect x="12" y="13" width="1" height="1" fill="#5fd3ee"/><rect x="13" y="13" width="1" height="1" fill="#8fdcec"/><rect x="14" y="13" width="1" height="1" fill="#c9f0f8"/><rect x="15" y="13" width="1" height="1" fill="#5fd3ee"/><rect x="0" y="14" width="1" height="1" fill="#3a9cc0"/><rect x="1" y="14" width="1" height="1" fill="#2fb8e0"/><rect x="2" y="14" width="1" height="1" fill="#2fb8e0"/><rect x="3" y="14" width="1" height="1" fill="#8fdcec"/><rect x="4" y="14" width="1" height="1" fill="#2fb8e0"/><rect x="5" y="14" width="1" height="1" fill="#c9f0f8"/><rect x="6" y="14" width="1" height="1" fill="#ffffff"/><rect x="7" y="14" width="1" height="1" fill="#ffffff"/><rect x="8" y="14" width="1" height="1" fill="#c9f0f8"/><rect x="9" y="14" width="1" height="1" fill="#c9f0f8"/><rect x="10" y="14" width="1" height="1" fill="#c9f0f8"/><rect x="11" y="14" width="1" height="1" fill="#c9f0f8"/><rect x="12" y="14" width="1" height="1" fill="#2fb8e0"/><rect x="13" y="14" width="1" height="1" fill="#ffffff"/><rect x="14" y="14" width="1" height="1" fill="#5fd3ee"/><rect x="15" y="14" width="1" height="1" fill="#ffffff"/><rect x="0" y="15" width="1" height="1" fill="#3a9cc0"/><rect x="1" y="15" width="1" height="1" fill="#2fb8e0"/><rect x="2" y="15" width="1" height="1" fill="#3a9cc0"/><rect x="3" y="15" width="1" height="1" fill="#2fb8e0"/><rect x="4" y="15" width="1" height="1" fill="#c9f0f8"/><rect x="5" y="15" width="1" height="1" fill="#3a9cc0"/><rect x="6" y="15" width="1" height="1" fill="#5fd3ee"/><rect x="7" y="15" width="1" height="1" fill="#8fdcec"/><rect x="8" y="15" width="1" height="1" fill="#ffffff"/><rect x="9" y="15" width="1" height="1" fill="#5fd3ee"/><rect x="10" y="15" width="1" height="1" fill="#8fdcec"/><rect x="11" y="15" width="1" height="1" fill="#2fb8e0"/><rect x="12" y="15" width="1" height="1" fill="#5fd3ee"/><rect x="13" y="15" width="1" height="1" fill="#3a9cc0"/><rect x="14" y="15" width="1" height="1" fill="#8fdcec"/><rect x="15" y="15" width="1" height="1" fill="#ffffff"/><rect x="15" y="0" width="1" height="16" fill="#304848"/></g><g transform="scale(1.0)"><path d="M13.2 10.6A6 6 0 1 1 12.4 4.1" fill="none" stroke="#ff0000" stroke-width="3.4"/><path d="M9.8 5.4L15.8 8.2L12.6 11.4z" fill="#ff0000"/><path d="M8 5.4a2.6 2.6 0 0 0 0 5.2z" fill="#fff"/></g></svg>
<div class="a" style="left:572.00px;top:221.11px;font-size:12px;line-height:12px;color:#000;transform-origin:0.00px 0;transform:scaleX(0.9083);">Save As</div>
<svg class="a" style="left:1306px;top:220px;" width="13" height="13" viewBox="0 0 13 13"><path d="M1 1L12 12M12 1L1 12" stroke="#000" stroke-width="1.1"/></svg>
<svg class="a" style="left:555px;top:252px;" width="15" height="14" viewBox="0 0 15 14"><path d="M1.5 7h12M7 1.5L1.5 7L7 12.5" fill="none" stroke="#c5c5c5" stroke-width="1.3"/></svg>
<svg class="a" style="left:585px;top:252px;" width="15" height="14" viewBox="0 0 15 14"><path d="M1.5 7h12M8 1.5L13.5 7L8 12.5" fill="none" stroke="#c5c5c5" stroke-width="1.3"/></svg>
<svg class="a" style="left:612px;top:255px;" width="8" height="7" viewBox="0 0 8 7"><path d="M1 1.5L4 4.5L7 1.5" fill="none" stroke="#c5c5c5" stroke-width="1.1"/></svg>
<svg class="a" style="left:629px;top:252px;" width="14" height="14" viewBox="0 0 14 14"><path d="M7 13V2M1.5 7.5L7 2L12.5 7.5" fill="none" stroke="#5f5f5f" stroke-width="1.6"/></svg>
<div class="r" style="left:649px;top:248px;width:452px;height:22px;background:#fff;border:1px solid #d9d9d9"></div>
<div class="r" style="left:1080px;top:249px;width:1px;height:20px;background:#d9d9d9;"></div>
<svg class="a" style="left:654px;top:250px;" width="14" height="16" viewBox="0 0 14 16"><rect x="0.5" y="0.5" width="11" height="15" rx="0.5" fill="#fde491" stroke="#eac54f"/><rect x="10.5" y="9.5" width="2.5" height="6" fill="#fde491" stroke="#eac54f"/></svg>
<svg class="a" style="left:672px;top:256px;" width="10" height="7" viewBox="0 0 10 7"><path d="M4.5 0.5L1.2 3.5L4.5 6.5M8.5 0.5L5.2 3.5L8.5 6.5" fill="none" stroke="#555" stroke-width="1.2"/></svg>
<div class="a" style="left:689.60px;top:253.11px;font-size:12px;line-height:12px;color:#000;transform-origin:0.00px 0;transform:scaleX(0.9193);">Beyma_SM212</div>
<div class="a" style="left:788.40px;top:253.11px;font-size:12px;line-height:12px;color:#000;transform-origin:0.00px 0;transform:scaleX(0.9474);">Mesures</div>
<div class="a" style="left:855.00px;top:253.11px;font-size:12px;line-height:12px;color:#000;transform-origin:0.00px 0;transform:scaleX(0.8527);">ARTA</div>
<div class="a" style="left:905.00px;top:253.11px;font-size:12px;line-height:12px;color:#000;transform-origin:0.00px 0;transform:scaleX(0.9189);">HP_1m_Raw</div>
<svg class="a" style="left:774px;top:256px;" width="6" height="8" viewBox="0 0 6 8"><path d="M1 0.6L4.2 3.6L1 6.6" fill="none" stroke="#707070" stroke-width="1.3"/></svg>
<svg class="a" style="left:841px;top:256px;" width="6" height="8" viewBox="0 0 6 8"><path d="M1 0.6L4.2 3.6L1 6.6" fill="none" stroke="#707070" stroke-width="1.3"/></svg>
<svg class="a" style="left:891px;top:256px;" width="6" height="8" viewBox="0 0 6 8"><path d="M1 0.6L4.2 3.6L1 6.6" fill="none" stroke="#707070" stroke-width="1.3"/></svg>
<svg class="a" style="left:1066px;top:256px;" width="11" height="8" viewBox="0 0 11 8"><path d="M1 1.5L5.5 6L10 1.5" fill="none" stroke="#444" stroke-width="1.5"/></svg>
<svg class="a" style="left:1085px;top:254px;" width="13" height="12" viewBox="0 0 13 12"><path d="M10.2 3.5A4.6 4.6 0 1 0 11 7.5" fill="none" stroke="#555" stroke-width="1.4"/><path d="M7.5 1.5l4 0l-0.5 4" fill="none" stroke="#555" stroke-width="1.3"/></svg>
<div class="r" style="left:1113px;top:248px;width:202px;height:22px;background:#fff;border:1px solid #d9d9d9"></div>
<div class="a" style="left:1122.60px;top:253.11px;font-size:12px;line-height:12px;color:#6d6d6d;transform-origin:0.00px 0;transform:scaleX(0.9306);">Rechercher dans : HP_1m_Raw</div>
<svg class="a" style="left:1294px;top:254px;" width="13" height="12" viewBox="0 0 13 12"><circle cx="8" cy="4.5" r="3.3" fill="none" stroke="#555" stroke-width="1.4"/><path d="M5.5 7L1 11.5" stroke="#555" stroke-width="1.6"/></svg>
<div class="r" style="left:544px;top:277px;width:782px;height:30px;background:#f5f6f7;"></div>
<div class="r" style="left:544px;top:307px;width:782px;height:1px;background:#e5e5e5;"></div>
<div class="a" style="left:561.50px;top:286.51px;font-size:12px;line-height:12px;color:#1e395b;transform-origin:0.00px 0;transform:scaleX(0.9539);">Organiser</div>
<svg class="a" style="left:618px;top:290px;" width="8" height="5" viewBox="0 0 8 5"><path d="M0 0h8l-4 4.5z" fill="#1e395b"/></svg>
<div class="a" style="left:656.50px;top:286.51px;font-size:12px;line-height:12px;color:#1e395b;letter-spacing:-0.183px;">Nouveau dossier</div>
<svg class="a" style="left:1233px;top:285px;" width="17" height="13" viewBox="0 0 17 13"><g shape-rendering="crispEdges"><rect x="0" y="0" width="5" height="13" fill="#8a8a8a"/><rect x="1" y="1" width="3" height="3" fill="#fff"/><rect x="1" y="5" width="3" height="3" fill="#fff"/><rect x="1" y="9" width="3" height="3" fill="#fff"/><rect x="2" y="2" width="1" height="1" fill="#4a8a6a"/><rect x="2" y="6" width="1" height="1" fill="#4a90ff"/><rect x="2" y="10" width="1" height="1" fill="#e03030"/><path d="M6 2.5h4M12 2.5h4M6 6.5h4M12 6.5h4M6 10.5h4M12 10.5h4" stroke="#707070" stroke-width="1"/></g></svg>
<svg class="a" style="left:1259px;top:290px;" width="8" height="5" viewBox="0 0 8 5"><path d="M0 0h7.5l-3.75 4.2z" fill="#1e395b"/></svg>
<svg class="a" style="left:1296px;top:284px;" width="17" height="17" viewBox="0 0 17 17"><circle cx="8.5" cy="8.5" r="8" fill="#1565c0"/><text x="8.5" y="13" text-anchor="middle" font-family="Liberation Sans" font-weight="bold" font-size="12" fill="#fff">?</text></svg>
<div class="r" style="left:544px;top:308px;width:782px;height:258px;background:#fff;"></div>
<div class="r" style="left:683px;top:308px;width:15px;height:258px;background:#f0f0f0;"></div>
<div class="r" style="left:683px;top:440px;width:15px;height:91px;background:#cdcdcd;"></div>
<svg class="a" style="left:686px;top:313px;" width="9" height="8" viewBox="0 0 9 8"><path d="M1.2 6L4.5 2.5L7.8 6" fill="none" stroke="#505050" stroke-width="2"/></svg>
<svg class="a" style="left:686px;top:554px;" width="9" height="8" viewBox="0 0 9 8"><path d="M1.2 2L4.5 5.5L7.8 2" fill="none" stroke="#505050" stroke-width="2"/></svg>
<div class="r" style="left:544px;top:548px;width:138px;height:18px;background:#cdcdcd;"></div>
<div class="r" style="left:544px;top:308px;width:139px;height:258px;overflow:hidden">
<div class="a" style="left:52.30px;top:6.41px;font-size:12px;line-height:12px;color:#000;transform-origin:0.00px 0;transform:scaleX(0.9457);">Bureau</div>
<div class="a" style="left:52.30px;top:30.41px;font-size:12px;line-height:12px;color:#000;letter-spacing:-0.002px;">Documents</div>
<div class="a" style="left:52.30px;top:54.41px;font-size:12px;line-height:12px;color:#000;transform-origin:0.00px 0;transform:scaleX(0.9502);">Images</div>
<div class="a" style="left:52.30px;top:78.41px;font-size:12px;line-height:12px;color:#000;letter-spacing:0.023px;">Musique</div>
<div class="a" style="left:52.30px;top:102.41px;font-size:12px;line-height:12px;color:#000;transform-origin:0.00px 0;transform:scaleX(0.9393);">Objets 3D</div>
<div class="a" style="left:52.30px;top:126.41px;font-size:12px;line-height:12px;color:#000;transform-origin:0.00px 0;transform:scaleX(0.9600);">Téléchargements</div>
<div class="a" style="left:52.30px;top:150.41px;font-size:12px;line-height:12px;color:#000;transform-origin:0.00px 0;transform:scaleX(0.9485);">Vidéos</div>
<div class="a" style="left:52.30px;top:174.41px;font-size:12px;line-height:12px;color:#000;transform-origin:0.00px 0;transform:scaleX(0.8874);">OS (C:)</div>
<div class="a" style="left:52.30px;top:198.41px;font-size:12px;line-height:12px;color:#000;transform-origin:0.00px 0;transform:scaleX(0.9327);">DATA (D:)</div>
<div class="a" style="left:52.30px;top:222.41px;font-size:12px;line-height:12px;color:#000;transform-origin:0.00px 0;transform:scaleX(0.9600);">Public (\\WDMYCLOUD)</div>
<div class="a" style="left:52.30px;top:246.41px;font-size:12px;line-height:12px;color:#000;transform-origin:0.00px 0;transform:scaleX(0.9600);">Jean-Paul (\\WDMYCLOUD)</div>
</div>
<svg class="a" style="left:575px;top:312px;" width="16" height="16" viewBox="0 0 16 16"><rect x="0" y="3" width="16" height="11" fill="#1e90ff"/><rect x="0" y="12" width="16" height="2" fill="#0a4f9a"/></svg>
<svg class="a" style="left:575px;top:336px;" width="16" height="16" viewBox="0 0 16 16"><path d="M2.5 0.5h8l3 3v12h-11z" fill="#fff" stroke="#888"/><path d="M4 5h7M4 8h7M4 11h7" stroke="#3a8ad6" stroke-width="1"/></svg>
<svg class="a" style="left:575px;top:360px;" width="16" height="16" viewBox="0 0 16 16"><rect x="0.5" y="3.5" width="15" height="10" fill="#fff" stroke="#888"/><path d="M2 12l4-4l4 2l4-2v4z" fill="#3d6b5a"/><rect x="2" y="5" width="12" height="3" fill="#bcd8ee"/></svg>
<svg class="a" style="left:575px;top:384px;" width="16" height="16" viewBox="0 0 16 16"><path d="M8 1v11" stroke="#1e90ff" stroke-width="1.8"/><ellipse cx="5.5" cy="12.5" rx="3" ry="2.5" fill="#1e90ff"/><path d="M8 1c2 2 4 3 3 7" fill="none" stroke="#1e90ff" stroke-width="1.8"/></svg>
<svg class="a" style="left:575px;top:408px;" width="16" height="16" viewBox="0 0 16 16"><path d="M8 1l7 3v9l-7 3l-7-3v-9z" fill="#7fd8e8"/><path d="M8 6l7-2v9l-7 3z" fill="#1ba3c8"/><path d="M8 6l-7-2v9l7 3z" fill="#cdf1f7"/></svg>
<svg class="a" style="left:575px;top:432px;" width="16" height="16" viewBox="0 0 16 16"><path d="M8 1v9" stroke="#1e80e0" stroke-width="3"/><path d="M1 8l7 7l7-7z" fill="#1e80e0"/></svg>
<svg class="a" style="left:575px;top:456px;" width="16" height="16" viewBox="0 0 16 16"><rect x="1" y="0.5" width="14" height="15" fill="#222"/><rect x="4" y="2" width="8" height="5" fill="#e8b040"/><rect x="4" y="9" width="8" height="5" fill="#2a6ad0"/><path d="M2 2v12M14 2v12" stroke="#ccc" stroke-dasharray="1 1"/></svg>
<svg class="a" style="left:575px;top:480px;" width="16" height="16" viewBox="0 0 16 16"><rect x="0" y="0" width="3" height="3" fill="#00a8f0"/><rect x="4" y="0" width="3" height="3" fill="#00a8f0"/><rect x="0" y="4" width="3" height="3" fill="#00a8f0"/><rect x="4" y="4" width="3" height="3" fill="#00a8f0"/><path d="M2 9h12l2 3v3h-16v-3z" fill="#ccc"/><rect x="0" y="12" width="16" height="3" fill="#333"/><rect x="12" y="13" width="2" height="1" fill="#4f4"/></svg>
<svg class="a" style="left:575px;top:504px;" width="16" height="16" viewBox="0 0 16 16"><path d="M2 9h12l2 3v3h-16v-3z" fill="#ccc"/><rect x="0" y="12" width="16" height="3" fill="#333"/><rect x="12" y="13" width="2" height="1" fill="#4f4"/></svg>
<svg class="a" style="left:575px;top:528px;" width="16" height="16" viewBox="0 0 16 16"><path d="M2 4h12l2 3v3h-16v-3z" fill="#ccc"/><rect x="0" y="7" width="16" height="3" fill="#333"/><rect x="12" y="8" width="2" height="1" fill="#4f4"/><path d="M8 10v3M1 14h14" stroke="#3cb030" stroke-width="2"/></svg>
<svg class="a" style="left:575px;top:552px;" width="16" height="16" viewBox="0 0 16 16"><path d="M2 4h12l2 3v3h-16v-3z" fill="#ccc"/><rect x="0" y="7" width="16" height="3" fill="#333"/><rect x="12" y="8" width="2" height="1" fill="#4f4"/><path d="M8 10v3M1 14h14" stroke="#3cb030" stroke-width="2"/></svg>
<div class="r" style="left:974px;top:308px;width:1px;height:25px;background:#e5e5e5;"></div>
<div class="r" style="left:1118px;top:308px;width:1px;height:25px;background:#e5e5e5;"></div>
<div class="r" style="left:1238px;top:308px;width:1px;height:25px;background:#e5e5e5;"></div>
<div class="r" style="left:1318px;top:308px;width:1px;height:25px;background:#e5e5e5;"></div>
<div class="a" style="left:720.70px;top:315.81px;font-size:12px;line-height:12px;color:#4c607a;letter-spacing:0.140px;">Nom</div>
<div class="a" style="left:981.25px;top:315.11px;font-size:12px;line-height:12px;color:#4c607a;letter-spacing:0.182px;">Modifié le</div>
<div class="a" style="left:1125.75px;top:315.11px;font-size:12px;line-height:12px;color:#4c607a;transform-origin:0.00px 0;transform:scaleX(0.9025);">Type</div>
<div class="a" style="left:1245.50px;top:315.11px;font-size:12px;line-height:12px;color:#4c607a;transform-origin:0.00px 0;transform:scaleX(0.9412);">Taille</div>
<svg class="a" style="left:840px;top:307px;" width="10" height="6" viewBox="0 0 10 6"><path d="M1 5L5 1.5L9 5" fill="none" stroke="#9a9a9a" stroke-width="1"/></svg>
<svg class="a" style="left:723px;top:341px;" width="13" height="17" viewBox="0 0 13 17"><path d="M0.5 0.5h8l3.5 3.5v12.5h-11.5z" fill="#fff" stroke="#8a8a8a"/><path d="M8.5 0.5v3.5h3.5" fill="none" stroke="#8a8a8a"/></svg>
<div class="a" style="left:741.20px;top:344.21px;font-size:12px;line-height:12px;color:#000;transform-origin:0.00px 0;transform:scaleX(0.9319);">Peerless_1m.pir</div>
<div class="a" style="left:980.80px;top:344.21px;font-size:12px;line-height:12px;color:#6d6d6d;transform-origin:0.00px 0;transform:scaleX(0.9431);">26/10/2019 13:51</div>
<div class="a" style="left:1125.30px;top:344.21px;font-size:12px;line-height:12px;color:#6d6d6d;transform-origin:0.00px 0;transform:scaleX(0.9218);">Fichier PIR</div>
<div class="a" style="left:1267.00px;top:344.21px;font-size:12px;line-height:12px;color:#6d6d6d;transform-origin:0.00px 0;transform:scaleX(0.9072);">1 025 Ko</div>
<svg class="a" style="left:723px;top:362px;" width="13" height="17" viewBox="0 0 13 17"><path d="M0.5 0.5h8l3.5 3.5v12.5h-11.5z" fill="#fff" stroke="#8a8a8a"/><path d="M8.5 0.5v3.5h3.5" fill="none" stroke="#8a8a8a"/></svg>
<div class="a" style="left:741.20px;top:365.21px;font-size:12px;line-height:12px;color:#000;letter-spacing:-0.219px;">Peerless_1m_distortion.pir</div>
<div class="a" style="left:980.80px;top:365.21px;font-size:12px;line-height:12px;color:#6d6d6d;transform-origin:0.00px 0;transform:scaleX(0.9431);">26/10/2019 13:49</div>
<div class="a" style="left:1125.30px;top:365.21px;font-size:12px;line-height:12px;color:#6d6d6d;transform-origin:0.00px 0;transform:scaleX(0.9218);">Fichier PIR</div>
<div class="a" style="left:1267.00px;top:365.21px;font-size:12px;line-height:12px;color:#6d6d6d;transform-origin:0.00px 0;transform:scaleX(0.9072);">1 025 Ko</div>
<svg class="a" style="left:723px;top:383px;" width="13" height="17" viewBox="0 0 13 17"><path d="M0.5 0.5h8l3.5 3.5v12.5h-11.5z" fill="#fff" stroke="#8a8a8a"/><path d="M8.5 0.5v3.5h3.5" fill="none" stroke="#8a8a8a"/></svg>
<div class="a" style="left:741.20px;top:386.21px;font-size:12px;line-height:12px;color:#000;transform-origin:0.00px 0;transform:scaleX(0.9272);">SM212_1m.Pir</div>
<div class="a" style="left:980.80px;top:386.21px;font-size:12px;line-height:12px;color:#6d6d6d;transform-origin:0.00px 0;transform:scaleX(0.9431);">26/10/2019 13:43</div>
<div class="a" style="left:1125.30px;top:386.21px;font-size:12px;line-height:12px;color:#6d6d6d;transform-origin:0.00px 0;transform:scaleX(0.9218);">Fichier PIR</div>
<div class="a" style="left:1267.00px;top:386.21px;font-size:12px;line-height:12px;color:#6d6d6d;transform-origin:0.00px 0;transform:scaleX(0.9072);">1 025 Ko</div>
<svg class="a" style="left:723px;top:404px;" width="13" height="17" viewBox="0 0 13 17"><path d="M0.5 0.5h8l3.5 3.5v12.5h-11.5z" fill="#fff" stroke="#8a8a8a"/><path d="M8.5 0.5v3.5h3.5" fill="none" stroke="#8a8a8a"/></svg>
<div class="a" style="left:741.20px;top:407.21px;font-size:12px;line-height:12px;color:#000;letter-spacing:-0.163px;">SM212_1m_distortion.pir</div>
<div class="a" style="left:980.80px;top:407.21px;font-size:12px;line-height:12px;color:#6d6d6d;transform-origin:0.00px 0;transform:scaleX(0.9431);">26/10/2019 13:44</div>
<div class="a" style="left:1125.30px;top:407.21px;font-size:12px;line-height:12px;color:#6d6d6d;transform-origin:0.00px 0;transform:scaleX(0.9218);">Fichier PIR</div>
<div class="a" style="left:1267.00px;top:407.21px;font-size:12px;line-height:12px;color:#6d6d6d;transform-origin:0.00px 0;transform:scaleX(0.9072);">1 025 Ko</div>
<svg class="a" style="left:723px;top:425px;" width="13" height="17" viewBox="0 0 13 17"><path d="M0.5 0.5h8l3.5 3.5v12.5h-11.5z" fill="#fff" stroke="#8a8a8a"/><path d="M8.5 0.5v3.5h3.5" fill="none" stroke="#8a8a8a"/></svg>
<div class="a" style="left:741.20px;top:428.21px;font-size:12px;line-height:12px;color:#000;transform-origin:0.00px 0;transform:scaleX(0.9079);">SM212_Peerless_1m.Pir</div>
<div class="a" style="left:980.80px;top:428.21px;font-size:12px;line-height:12px;color:#6d6d6d;transform-origin:0.00px 0;transform:scaleX(0.9431);">26/10/2019 13:57</div>
<div class="a" style="left:1125.30px;top:428.21px;font-size:12px;line-height:12px;color:#6d6d6d;transform-origin:0.00px 0;transform:scaleX(0.9218);">Fichier PIR</div>
<div class="a" style="left:1267.00px;top:428.21px;font-size:12px;line-height:12px;color:#6d6d6d;transform-origin:0.00px 0;transform:scaleX(0.9072);">1 025 Ko</div>
<div class="r" style="left:703px;top:550px;width:623px;height:15px;background:#f0f0f0;"></div>
<div class="r" style="left:720px;top:550px;width:588px;height:15px;background:#cdcdcd;"></div>
<svg class="a" style="left:707px;top:553px;" width="8" height="10" viewBox="0 0 8 10"><path d="M6 1.2L2.3 4.8L6 8.4" fill="none" stroke="#505050" stroke-width="2"/></svg>
<svg class="a" style="left:1315px;top:553px;" width="8" height="10" viewBox="0 0 8 10"><path d="M2 1.2L5.7 4.8L2 8.4" fill="none" stroke="#505050" stroke-width="2"/></svg>
<div class="a" style="left:577.50px;top:583.36px;font-size:12px;line-height:12px;color:#000;letter-spacing:0.063px;">Nom du fichier :</div>
<div class="r" style="left:668px;top:577px;width:654px;height:23px;background:#fff;border:1px solid #0078d7"></div>
<div class="r" style="left:674px;top:580px;width:57px;height:15px;background:#0078d7;"></div>
<div class="r" style="left:731px;top:580px;width:1px;height:15px;background:#000;"></div>
<div class="a" style="left:675.00px;top:582.31px;font-size:12px;line-height:12px;color:#fff;transform-origin:0.00px 0;transform:scaleX(0.9042);">SM212_1m</div>
<div class="r" style="left:709px;top:593px;width:5px;height:1px;background:#fff;"></div>
<svg class="a" style="left:1309px;top:587px" width="9" height="5"><path d="M0.5 0.5L4.5 4L8.5 0.5" fill="none" stroke="#444" stroke-width="1"/></svg>
<div class="a" style="left:633.25px;top:608.36px;font-size:12px;line-height:12px;color:#000;transform-origin:0.00px 0;transform:scaleX(0.8945);">Type :</div>
<div class="r" style="left:668px;top:602px;width:654px;height:23px;background:#e1e1e1;border:1px solid #adadad"></div>
<div class="a" style="left:672.00px;top:608.36px;font-size:12px;line-height:12px;color:#000;letter-spacing:-0.167px;">Arta Files (*.pir)</div>
<svg class="a" style="left:1309px;top:611px" width="9" height="5"><path d="M0.5 0.5L4.5 4L8.5 0.5" fill="none" stroke="#444" stroke-width="1"/></svg>
<svg class="a" style="left:555px;top:657px;" width="11" height="8" viewBox="0 0 11 8"><path d="M1 6.5L5.5 2L10 6.5" fill="none" stroke="#444" stroke-width="1.5"/></svg>
<div class="a" style="left:573.25px;top:655.36px;font-size:12px;line-height:12px;color:#000;transform-origin:0.00px 0;transform:scaleX(0.9480);">Masquer les dossiers</div>
<div class="r" style="left:1115px;top:646px;width:94px;height:24px;background:#e1e1e1;border:2px solid #0078d7"></div>
<div class="a" style="left:1134.30px;top:652.11px;font-size:12px;line-height:12px;color:#000;letter-spacing:-0.248px;">Enregistrer</div>
<div class="r" style="left:1223px;top:646px;width:86px;height:24px;background:#e1e1e1;border:1px solid #adadad"></div>
<div class="a" style="left:1245.00px;top:652.11px;font-size:12px;line-height:12px;color:#000;letter-spacing:0.177px;">Annuler</div>
<div class="r" style="left:1322px;top:673px;width:2px;height:2px;background:#a0a0a0;"></div>
<div class="r" style="left:1319px;top:676px;width:2px;height:2px;background:#a0a0a0;"></div>
<div class="r" style="left:1322px;top:676px;width:2px;height:2px;background:#a0a0a0;"></div>
<div class="r" style="left:1316px;top:679px;width:2px;height:2px;background:#a0a0a0;"></div>
<div class="r" style="left:1319px;top:679px;width:2px;height:2px;background:#a0a0a0;"></div>
<div class="r" style="left:1322px;top:679px;width:2px;height:2px;background:#a0a0a0;"></div>
<div class="a" style="left:1561.30px;top:111.81px;font-size:12px;line-height:12px;color:#000;transform-origin:0.00px 0;transform:scaleX(0.8682);">Marker</div>
<div class="r" style="left:1544px;top:130px;width:22px;height:18px;background:#e1e1e1;border:1px solid #adadad"></div>
<div class="a" style="left:1546.70px;top:134.11px;font-size:12px;line-height:12px;color:#000;transform-origin:0.00px 0;transform:scaleX(0.8889);">Set</div>
<div class="r" style="left:1573px;top:130px;width:21px;height:18px;background:#e1e1e1;border:1px solid #adadad"></div>
<div class="a" style="left:1575.60px;top:134.11px;font-size:12px;line-height:12px;color:#000;transform-origin:0.00px 0;transform:scaleX(0.8167);">Del</div>
<div class="r" style="left:1544px;top:173px;width:15px;height:21px;background:#e1e1e1;border:1px solid #adadad"></div>
<svg class="a" style="left:1548px;top:181px;" width="7" height="4" viewBox="0 0 7 4"><path d="M0 3.5L3.5 0L7 3.5z" fill="#000"/></svg>
<div class="r" style="left:1544px;top:194px;width:15px;height:21px;background:#e1e1e1;border:1px solid #adadad"></div>
<svg class="a" style="left:1548px;top:203px;" width="7" height="4" viewBox="0 0 7 4"><path d="M0 0.5L3.5 4L7 0.5z" fill="#000"/></svg>
<div class="a" style="left:1563.60px;top:178.41px;font-size:12px;line-height:12px;color:#000;letter-spacing:-0.080px;">Offset</div>
<div class="r" style="left:1564px;top:197px;width:30px;height:18px;background:#e1e1e1;border:1px solid #adadad"></div>
<div class="a" style="left:1569.30px;top:201.11px;font-size:12px;line-height:12px;color:#000;transform-origin:0.00px 0;transform:scaleX(0.8213);">Null</div>
<div class="a" style="left:1571.60px;top:230.21px;font-size:12px;line-height:12px;color:#000;transform-origin:0.00px 0;transform:scaleX(0.8136);">Gain</div>
<div class="r" style="left:1543px;top:244px;width:15px;height:21px;background:#e1e1e1;border:1px solid #adadad"></div>
<svg class="a" style="left:1547px;top:252px;" width="7" height="4" viewBox="0 0 7 4"><path d="M0 3.5L3.5 0L7 3.5z" fill="#000"/></svg>
<div class="r" style="left:1543px;top:265px;width:15px;height:21px;background:#e1e1e1;border:1px solid #adadad"></div>
<svg class="a" style="left:1547px;top:274px;" width="7" height="4" viewBox="0 0 7 4"><path d="M0 0.5L3.5 4L7 0.5z" fill="#000"/></svg>
<div class="r" style="left:1564px;top:246px;width:30px;height:18px;background:#e1e1e1;border:1px solid #adadad"></div>
<div class="a" style="left:1567.50px;top:250.11px;font-size:12px;line-height:12px;color:#000;transform-origin:0.00px 0;transform:scaleX(0.9700);">Max</div>
<div class="r" style="left:1564px;top:268px;width:30px;height:18px;background:#e1e1e1;border:1px solid #adadad"></div>
<div class="a" style="left:1570.00px;top:272.11px;font-size:12px;line-height:12px;color:#000;transform-origin:0.00px 0;transform:scaleX(0.9058);">Min</div>
<div class="a" style="left:1565.60px;top:307.51px;font-size:12px;line-height:12px;color:#000;transform-origin:0.00px 0;transform:scaleX(0.8480);">Zoom</div>
<div class="r" style="left:1543px;top:324px;width:15px;height:20px;background:#e1e1e1;border:1px solid #adadad"></div>
<svg class="a" style="left:1547px;top:332px;" width="7" height="4" viewBox="0 0 7 4"><path d="M0 3.5L3.5 0L7 3.5z" fill="#000"/></svg>
<div class="r" style="left:1543px;top:344px;width:15px;height:20px;background:#e1e1e1;border:1px solid #adadad"></div>
<svg class="a" style="left:1547px;top:353px;" width="7" height="4" viewBox="0 0 7 4"><path d="M0 0.5L3.5 4L7 0.5z" fill="#000"/></svg>
<div class="r" style="left:1564px;top:324px;width:30px;height:18px;background:#e1e1e1;border:1px solid #adadad"></div>
<div class="a" style="left:1567.50px;top:328.11px;font-size:12px;line-height:12px;color:#000;transform-origin:0.00px 0;transform:scaleX(0.9700);">Max</div>
<div class="r" style="left:1564px;top:346px;width:30px;height:18px;background:#e1e1e1;border:1px solid #adadad"></div>
<div class="a" style="left:1570.00px;top:350.11px;font-size:12px;line-height:12px;color:#000;transform-origin:0.00px 0;transform:scaleX(0.9058);">Min</div>
<div class="a" style="left:1564.40px;top:385.31px;font-size:12px;line-height:12px;color:#000;transform-origin:0.00px 0;transform:scaleX(0.8400);">Scroll</div>
<div class="r" style="left:1547px;top:400px;width:21px;height:15px;background:#e1e1e1;border:1px solid #adadad"></div>
<div class="r" style="left:1568px;top:400px;width:21px;height:15px;background:#e1e1e1;border:1px solid #adadad"></div>
<svg class="a" style="left:1555px;top:404px;" width="4" height="7" viewBox="0 0 4 7"><path d="M3.5 0L0 3.5L3.5 7z" fill="#000"/></svg>
<svg class="a" style="left:1576px;top:404px;" width="4" height="7" viewBox="0 0 4 7"><path d="M0.5 0L4 3.5L0.5 7z" fill="#000"/></svg>
<div class="r" style="left:0px;top:839px;width:1536px;height:1px;background:#d0d0d0;"></div>
<div class="r" style="left:0px;top:840px;width:1600px;height:1px;background:#e3e3e3;"></div>
<div class="r" style="left:0px;top:841px;width:1600px;height:1px;background:#fff;"></div>
<div class="a" style="left:2.50px;top:846.41px;font-size:12px;line-height:12px;color:#000;transform-origin:0.00px 0;transform:scaleX(0.8910);">Ready</div>
<div class="a" style="left:1443.75px;top:846.11px;font-size:12px;line-height:12px;color:#000;transform-origin:0.00px 0;transform:scaleX(0.9083);">L:-100.0</div>
<div class="a" style="left:1501.25px;top:846.11px;font-size:12px;line-height:12px;color:#000;transform-origin:0.00px 0;transform:scaleX(0.9072);">R:-100.0</div>
<div class="a" style="left:1559.25px;top:846.11px;font-size:12px;line-height:12px;color:#000;transform-origin:0.00px 0;transform:scaleX(0.8583);">dBFS</div>
<div class="r" style="left:1537px;top:839px;width:63px;height:1px;background:#a0a0a0;"></div>
<div class="r" style="left:1493px;top:843px;width:1px;height:16px;background:#d7d7d7;"></div>
<div class="r" style="left:1551px;top:843px;width:1px;height:16px;background:#d7d7d7;"></div>
<div class="r" style="left:1599px;top:843px;width:1px;height:16px;background:#d7d7d7;"></div>
<div class="r" style="left:0px;top:860px;width:1600px;height:40px;background:#1c2a2f;"></div>
<div class="r" style="left:48px;top:860px;width:288px;height:40px;background:#f0f0f0;border:1px solid #c8c8c8;border-bottom:none"></div>
<div class="a" style="left:88.00px;top:872.94px;font-size:15px;line-height:15px;color:#333;letter-spacing:-0.121px;">Taper ici pour rechercher</div>
<svg class="a" style="left:16px;top:872px;" width="17" height="17" viewBox="0 0 17 17"><path d="M0 2.3L6.8 1.4V7.9H0z M7.6 1.3L17 0V7.9H7.6z M0 8.7H6.8V15.2L0 14.3z M7.6 8.7H17V16.6L7.6 15.3z" fill="#fff"/></svg>
<svg class="a" style="left:59px;top:871px;" width="18" height="18" viewBox="0 0 18 18"><circle cx="11" cy="6.5" r="5" fill="none" stroke="#222" stroke-width="1.4"/><path d="M7.4 10.2L1 16.6" stroke="#222" stroke-width="1.5"/></svg>
<svg class="a" style="left:351px;top:872px;" width="18" height="16" viewBox="0 0 18 16"><rect x="2.5" y="3.5" width="10" height="9" fill="none" stroke="#fff" stroke-width="1.2"/><path d="M0 1h15M0 15h15" stroke="#fff" stroke-width="1.2"/><path d="M16 2v2M16 6v4M16 12v2" stroke="#fff" stroke-width="1.6"/></svg>
<svg class="a" style="left:398px;top:867px;" width="26" height="26" viewBox="0 0 26 26"><defs><linearGradient id="eg" x1="0.2" y1="1" x2="0.5" y2="0"><stop offset="0" stop-color="#0b4f9e"/><stop offset="0.6" stop-color="#1a7fd6"/><stop offset="1" stop-color="#38b4ee"/></linearGradient><linearGradient id="eg2" x1="0" y1="0" x2="1" y2="0.6"><stop offset="0" stop-color="#33b9e8"/><stop offset="1" stop-color="#5fd77c"/></linearGradient></defs><circle cx="12.5" cy="12.5" r="12" fill="url(#eg)"/><path d="M1.2 9.5C3 4 7.5 0.5 12.5 0.5C19 0.5 24.5 6 24.5 12.5C24.5 15 23.5 17 22 18.5C20 19.5 17 19.5 15 18C18.5 17 19.5 14 17.5 11.5C14.5 8 7 7 1.2 9.5Z" fill="url(#eg2)"/><path d="M9 13.5C9 10.5 12 9.5 14.5 10.5C17 11.5 18 14 17 16.5C15 18 12 17.5 10.5 16.5C9.5 15.5 9 14.5 9 13.5Z" fill="#1c2a2f"/><path d="M2 15C3 19 6 22.5 10.5 23.5C7.5 21 6 17.5 7 14C5 13.5 3 14 2 15Z" fill="#2a8ee0" opacity="0.6"/></svg>
<svg class="a" style="left:449px;top:870px;" width="22" height="20" viewBox="0 0 22 20"><path d="M0 1.2h8l1 1.3h0v2h-9z" fill="#e5a010"/><rect x="0" y="2.5" width="21.5" height="15.5" fill="#ffd35b"/><rect x="0" y="2.5" width="21.5" height="1" fill="#f0b829"/><path d="M3.8 19.2v-8.2h13.6v8.2h-3.8v-4h-6v4z" fill="#4a9fe8"/></svg>
<svg class="a" style="left:496px;top:869px;" width="26" height="22" viewBox="0 0 26 22"><rect x="8" y="0" width="15.5" height="16" fill="#0f6fd0"/><rect x="15.5" y="0" width="8" height="4.5" fill="#2fb0f0"/><rect x="15.5" y="4.5" width="8" height="5.5" fill="#1490e0"/><path d="M7 10.5l8.5 5.5l9-6v11.5h-17.5z" fill="#1aa0e8"/><path d="M7 21l8.5-5l9 5z" fill="#0a78d0"/><rect x="1" y="5" width="12" height="12" fill="#0a64c0"/><ellipse cx="7" cy="11" rx="3.3" ry="3.6" fill="none" stroke="#fff" stroke-width="1.8"/></svg>
<svg class="a" style="left:549px;top:868px;" width="18" height="24" viewBox="0 0 18 24"><rect x="0" y="0" width="18" height="24" rx="1.5" fill="#8a97a3"/><rect x="2" y="2" width="14" height="4" fill="#5fd5f5"/><rect x="2" y="8" width="4" height="4" fill="#e0e4e8"/><rect x="2" y="13" width="4" height="4" fill="#e0e4e8"/><rect x="2" y="18" width="4" height="4" fill="#e0e4e8"/><rect x="7" y="8" width="4" height="4" fill="#e0e4e8"/><rect x="7" y="13" width="4" height="4" fill="#e0e4e8"/><rect x="7" y="18" width="4" height="4" fill="#e0e4e8"/><rect x="12" y="8" width="4" height="4" fill="#e0e4e8"/><rect x="12" y="13" width="4" height="9" fill="#1e4fa0"/></svg>
<svg class="a" style="left:595px;top:869px;" width="25" height="22" viewBox="0 0 25 22"><rect x="6" y="0" width="18" height="21.5" fill="#1d9e5c"/><rect x="15" y="0" width="9" height="6" fill="#33c481"/><rect x="15" y="6" width="9" height="5" fill="#21a366"/><rect x="6" y="11" width="18" height="5" fill="#107c41"/><rect x="6" y="16" width="18" height="5.5" fill="#185c37"/><rect x="0" y="5.5" width="12" height="12" fill="#107c41"/><path d="M3.3 8.3l5.4 6.6M8.7 8.3l-5.4 6.6" stroke="#fff" stroke-width="1.9"/></svg>
<svg class="a" style="left:647px;top:868px;" width="18" height="24" viewBox="0 0 18 24"><path d="M2.5 0.5l3.5 3.5h6l3.5-3.5l1.5 8c0 7-4 12-8 15c-4-3-8-8-8-15z" fill="#fff"/><ellipse cx="5.5" cy="10.5" rx="2.6" ry="1.7" transform="rotate(25 5.5 10.5)" fill="#000"/><ellipse cx="12.5" cy="10.5" rx="2.6" ry="1.7" transform="rotate(-25 12.5 10.5)" fill="#000"/><path d="M6.5 17l2.5-1.5l2.5 1.5" fill="none" stroke="#333" stroke-width="0.8"/></svg>
<svg class="a" style="left:692px;top:868px;" width="26" height="25" viewBox="0 0 26 25"><path d="M1 14C0 8 6 4 12 4.5C18 5 21 8.5 20 12C19 15 15 14 15 17C15 20 12 23 8 22C4 21 1.5 18 1 14Z" fill="#c6def0"/><circle cx="4.5" cy="13" r="1.8" fill="#e84040"/><circle cx="7.5" cy="9" r="1.8" fill="#50c040"/><circle cx="12" cy="7.5" r="1.8" fill="#f0b830"/><circle cx="10" cy="15" r="1.3" fill="#1c2a2f"/><path d="M11 24L21 5" stroke="#e07820" stroke-width="2"/><path d="M19.5 6L22 1L25 3L21.5 7z" fill="#d8b890"/></svg>
<svg class="a" style="left:745px;top:870px;" width="19" height="19" viewBox="0 0 19 19"><rect width="19" height="19" rx="3" fill="#111"/><text x="9.5" y="14" text-anchor="middle" font-family="Liberation Sans" font-weight="bold" font-size="11" fill="#fff">iD</text></svg>
<svg class="a" style="left:791px;top:868px;" width="25" height="24" viewBox="0 0 25 24"><path d="M17 0L24 3.5V20.5L17 24L8 15L3.5 18.5L0 16.5V7.5L3.5 5.5L8 9Z" fill="#9a6ae0"/><path d="M17 0L24 3.5V20.5L17 24Z" fill="#c59af6"/><path d="M17 6V18L9.5 12Z" fill="#1c2a2f"/><path d="M0 7.5L3.5 5.5L8 9L5 12L8 15L3.5 18.5L0 16.5Z" fill="#7d4cc6"/><path d="M3 9.5V14.5L5.5 12Z" fill="#1c2a2f"/></svg>
<svg class="a" style="left:840px;top:869px;" width="25" height="22" viewBox="0 0 25 22"><rect x="7" y="0" width="18" height="22" fill="#2b7cd3"/><rect x="7" y="0" width="18" height="6" fill="#41a5ee"/><rect x="7" y="15" width="18" height="7" fill="#185abd"/><rect x="0" y="5" width="13" height="13" fill="#185abd"/><path d="M2 8l2 7l2.5-5l2.5 5l2-7" fill="none" stroke="#fff" stroke-width="1.4"/></svg>
<svg class="a" style="left:889px;top:868px;" width="25" height="24" viewBox="0 0 25 24"><rect width="25" height="24" fill="#3c0a9c"/><text x="12.5" y="9" text-anchor="middle" font-family="Liberation Sans" font-weight="bold" font-size="9" fill="#d8d8d8">REW</text><path d="M2 21C3 17 4 14 5 9C6 14 6.5 16 8 18C9 16 10 15 11 10C12 15 13 17 15 18C17 17 20 16 23 17V23H2Z" fill="#20a8c0"/><path d="M3 22C4 18 5 15 5.5 12C6.5 16 8 19 10 19C11 17 11.5 15 12 13C13 17 15 19 17 19C19 18 21 18 23 18.5V22Z" fill="#30c040"/><ellipse cx="6.5" cy="19" rx="2.5" ry="2.2" fill="#f0d020"/><ellipse cx="12.5" cy="18.5" rx="2.2" ry="2.5" fill="#f0d020"/><ellipse cx="6.5" cy="19" rx="1.2" ry="1.2" fill="#e83020"/><ellipse cx="12.5" cy="18.5" rx="1" ry="1.3" fill="#e83020"/></svg>
<div class="r" style="left:926px;top:860px;width:48px;height:40px;background:#46545a;"></div>
<div class="r" style="left:926px;top:898px;width:48px;height:2px;background:#76b9ed;"></div>
<svg class="a" style="left:938px;top:868px;" width="24" height="24" viewBox="0 0 24 24"><g transform="scale(1.5)" shape-rendering="crispEdges"><rect x="0" y="0" width="1" height="1" fill="#2fb8e0"/><rect x="1" y="0" width="1" height="1" fill="#5fd3ee"/><rect x="2" y="0" width="1" height="1" fill="#c9f0f8"/><rect x="3" y="0" width="1" height="1" fill="#3a9cc0"/><rect x="4" y="0" width="1" height="1" fill="#ffffff"/><rect x="5" y="0" width="1" height="1" fill="#ffffff"/><rect x="6" y="0" width="1" height="1" fill="#8fdcec"/><rect x="7" y="0" width="1" height="1" fill="#ffffff"/><rect x="8" y="0" width="1" height="1" fill="#2fb8e0"/><rect x="9" y="0" width="1" height="1" fill="#8fdcec"/><rect x="10" y="0" width="1" height="1" fill="#ffffff"/><rect x="11" y="0" width="1" height="1" fill="#8fdcec"/><rect x="12" y="0" width="1" height="1" fill="#5fd3ee"/><rect x="13" y="0" width="1" height="1" fill="#ffffff"/><rect x="14" y="0" width="1" height="1" fill="#ffffff"/><rect x="15" y="0" width="1" height="1" fill="#c9f0f8"/><rect x="0" y="1" width="1" height="1" fill="#c9f0f8"/><rect x="1" y="1" width="1" height="1" fill="#ffffff"/><rect x="2" y="1" width="1" height="1" fill="#5fd3ee"/><rect x="3" y="1" width="1" height="1" fill="#ffffff"/><rect x="4" y="1" width="1" height="1" fill="#8fdcec"/><rect x="5" y="1" width="1" height="1" fill="#c9f0f8"/><rect x="6" y="1" width="1" height="1" fill="#ffffff"/><rect x="7" y="1" width="1" height="1" fill="#8fdcec"/><rect x="8" y="1" width="1" height="1" fill="#ffffff"/><rect x="9" y="1" width="1" height="1" fill="#5fd3ee"/><rect x="10" y="1" width="1" height="1" fill="#3a9cc0"/><rect x="11" y="1" width="1" height="1" fill="#3a9cc0"/><rect x="12" y="1" width="1" height="1" fill="#8fdcec"/><rect x="13" y="1" width="1" height="1" fill="#ffffff"/><rect x="14" y="1" width="1" height="1" fill="#8fdcec"/><rect x="15" y="1" width="1" height="1" fill="#8fdcec"/><rect x="0" y="2" width="1" height="1" fill="#c9f0f8"/><rect x="1" y="2" width="1" height="1" fill="#ffffff"/><rect x="2" y="2" width="1" height="1" fill="#5fd3ee"/><rect x="3" y="2" width="1" height="1" fill="#ffffff"/><rect x="4" y="2" width="1" height="1" fill="#8fdcec"/><rect x="5" y="2" width="1" height="1" fill="#5fd3ee"/><rect x="6" y="2" width="1" height="1" fill="#2fb8e0"/><rect x="7" y="2" width="1" height="1" fill="#c9f0f8"/><rect x="8" y="2" width="1" height="1" fill="#5fd3ee"/><rect x="9" y="2" width="1" height="1" fill="#8fdcec"/><rect x="10" y="2" width="1" height="1" fill="#ffffff"/><rect x="11" y="2" width="1" height="1" fill="#8fdcec"/><rect x="12" y="2" width="1" height="1" fill="#2fb8e0"/><rect x="13" y="2" width="1" height="1" fill="#8fdcec"/><rect x="14" y="2" width="1" height="1" fill="#3a9cc0"/><rect x="15" y="2" width="1" height="1" fill="#5fd3ee"/><rect x="0" y="3" width="1" height="1" fill="#ffffff"/><rect x="1" y="3" width="1" height="1" fill="#8fdcec"/><rect x="2" y="3" width="1" height="1" fill="#8fdcec"/><rect x="3" y="3" width="1" height="1" fill="#3a9cc0"/><rect x="4" y="3" width="1" height="1" fill="#5fd3ee"/><rect x="5" y="3" width="1" height="1" fill="#2fb8e0"/><rect x="6" y="3" width="1" height="1" fill="#ffffff"/><rect x="7" y="3" width="1" height="1" fill="#8fdcec"/><rect x="8" y="3" width="1" height="1" fill="#3a9cc0"/><rect x="9" y="3" width="1" height="1" fill="#ffffff"/><rect x="10" y="3" width="1" height="1" fill="#8fdcec"/><rect x="11" y="3" width="1" height="1" fill="#ffffff"/><rect x="12" y="3" width="1" height="1" fill="#8fdcec"/><rect x="13" y="3" width="1" height="1" fill="#5fd3ee"/><rect x="14" y="3" width="1" height="1" fill="#c9f0f8"/><rect x="15" y="3" width="1" height="1" fill="#3a9cc0"/><rect x="0" y="4" width="1" height="1" fill="#8fdcec"/><rect x="1" y="4" width="1" height="1" fill="#c9f0f8"/><rect x="2" y="4" width="1" height="1" fill="#2fb8e0"/><rect x="3" y="4" width="1" height="1" fill="#c9f0f8"/><rect x="4" y="4" width="1" height="1" fill="#8fdcec"/><rect x="5" y="4" width="1" height="1" fill="#c9f0f8"/><rect x="6" y="4" width="1" height="1" fill="#2fb8e0"/><rect x="7" y="4" width="1" height="1" fill="#2fb8e0"/><rect x="8" y="4" width="1" height="1" fill="#5fd3ee"/><rect x="9" y="4" width="1" height="1" fill="#5fd3ee"/><rect x="10" y="4" width="1" height="1" fill="#3a9cc0"/><rect x="11" y="4" width="1" height="1" fill="#5fd3ee"/><rect x="12" y="4" width="1" height="1" fill="#ffffff"/><rect x="13" y="4" width="1" height="1" fill="#8fdcec"/><rect x="14" y="4" width="1" height="1" fill="#2fb8e0"/><rect x="15" y="4" width="1" height="1" fill="#8fdcec"/><rect x="0" y="5" width="1" height="1" fill="#c9f0f8"/><rect x="1" y="5" width="1" height="1" fill="#2fb8e0"/><rect x="2" y="5" width="1" height="1" fill="#3a9cc0"/><rect x="3" y="5" width="1" height="1" fill="#c9f0f8"/><rect x="4" y="5" width="1" height="1" fill="#2fb8e0"/><rect x="5" y="5" width="1" height="1" fill="#8fdcec"/><rect x="6" y="5" width="1" height="1" fill="#ffffff"/><rect x="7" y="5" width="1" height="1" fill="#ffffff"/><rect x="8" y="5" width="1" height="1" fill="#8fdcec"/><rect x="9" y="5" width="1" height="1" fill="#c9f0f8"/><rect x="10" y="5" width="1" height="1" fill="#5fd3ee"/><rect x="11" y="5" width="1" height="1" fill="#2fb8e0"/><rect x="12" y="5" width="1" height="1" fill="#5fd3ee"/><rect x="13" y="5" width="1" height="1" fill="#c9f0f8"/><rect x="14" y="5" width="1" height="1" fill="#c9f0f8"/><rect x="15" y="5" width="1" height="1" fill="#ffffff"/><rect x="0" y="6" width="1" height="1" fill="#3a9cc0"/><rect x="1" y="6" width="1" height="1" fill="#ffffff"/><rect x="2" y="6" width="1" height="1" fill="#8fdcec"/><rect x="3" y="6" width="1" height="1" fill="#8fdcec"/><rect x="4" y="6" width="1" height="1" fill="#2fb8e0"/><rect x="5" y="6" width="1" height="1" fill="#2fb8e0"/><rect x="6" y="6" width="1" height="1" fill="#3a9cc0"/><rect x="7" y="6" width="1" height="1" fill="#2fb8e0"/><rect x="8" y="6" width="1" height="1" fill="#8fdcec"/><rect x="9" y="6" width="1" height="1" fill="#c9f0f8"/><rect x="10" y="6" width="1" height="1" fill="#8fdcec"/><rect x="11" y="6" width="1" height="1" fill="#c9f0f8"/><rect x="12" y="6" width="1" height="1" fill="#ffffff"/><rect x="13" y="6" width="1" height="1" fill="#ffffff"/><rect x="14" y="6" width="1" height="1" fill="#2fb8e0"/><rect x="15" y="6" width="1" height="1" fill="#c9f0f8"/><rect x="0" y="7" width="1" height="1" fill="#3a9cc0"/><rect x="1" y="7" width="1" height="1" fill="#3a9cc0"/><rect x="2" y="7" width="1" height="1" fill="#ffffff"/><rect x="3" y="7" width="1" height="1" fill="#ffffff"/><rect x="4" y="7" width="1" height="1" fill="#3a9cc0"/><rect x="5" y="7" width="1" height="1" fill="#3a9cc0"/><rect x="6" y="7" width="1" height="1" fill="#2fb8e0"/><rect x="7" y="7" width="1" height="1" fill="#3a9cc0"/><rect x="8" y="7" width="1" height="1" fill="#8fdcec"/><rect x="9" y="7" width="1" height="1" fill="#3a9cc0"/><rect x="10" y="7" width="1" height="1" fill="#c9f0f8"/><rect x="11" y="7" width="1" height="1" fill="#2fb8e0"/><rect x="12" y="7" width="1" height="1" fill="#3a9cc0"/><rect x="13" y="7" width="1" height="1" fill="#c9f0f8"/><rect x="14" y="7" width="1" height="1" fill="#3a9cc0"/><rect x="15" y="7" width="1" height="1" fill="#2fb8e0"/><rect x="0" y="8" width="1" height="1" fill="#ffffff"/><rect x="1" y="8" width="1" height="1" fill="#c9f0f8"/><rect x="2" y="8" width="1" height="1" fill="#2fb8e0"/><rect x="3" y="8" width="1" height="1" fill="#5fd3ee"/><rect x="4" y="8" width="1" height="1" fill="#8fdcec"/><rect x="5" y="8" width="1" height="1" fill="#ffffff"/><rect x="6" y="8" width="1" height="1" fill="#c9f0f8"/><rect x="7" y="8" width="1" height="1" fill="#ffffff"/><rect x="8" y="8" width="1" height="1" fill="#5fd3ee"/><rect x="9" y="8" width="1" height="1" fill="#2fb8e0"/><rect x="10" y="8" width="1" height="1" fill="#5fd3ee"/><rect x="11" y="8" width="1" height="1" fill="#3a9cc0"/><rect x="12" y="8" width="1" height="1" fill="#5fd3ee"/><rect x="13" y="8" width="1" height="1" fill="#c9f0f8"/><rect x="14" y="8" width="1" height="1" fill="#c9f0f8"/><rect x="15" y="8" width="1" height="1" fill="#c9f0f8"/><rect x="0" y="9" width="1" height="1" fill="#ffffff"/><rect x="1" y="9" width="1" height="1" fill="#5fd3ee"/><rect x="2" y="9" width="1" height="1" fill="#c9f0f8"/><rect x="3" y="9" width="1" height="1" fill="#c9f0f8"/><rect x="4" y="9" width="1" height="1" fill="#8fdcec"/><rect x="5" y="9" width="1" height="1" fill="#2fb8e0"/><rect x="6" y="9" width="1" height="1" fill="#5fd3ee"/><rect x="7" y="9" width="1" height="1" fill="#c9f0f8"/><rect x="8" y="9" width="1" height="1" fill="#8fdcec"/><rect x="9" y="9" width="1" height="1" fill="#2fb8e0"/><rect x="10" y="9" width="1" height="1" fill="#3a9cc0"/><rect x="11" y="9" width="1" height="1" fill="#c9f0f8"/><rect x="12" y="9" width="1" height="1" fill="#2fb8e0"/><rect x="13" y="9" width="1" height="1" fill="#3a9cc0"/><rect x="14" y="9" width="1" height="1" fill="#c9f0f8"/><rect x="15" y="9" width="1" height="1" fill="#5fd3ee"/><rect x="0" y="10" width="1" height="1" fill="#5fd3ee"/><rect x="1" y="10" width="1" height="1" fill="#ffffff"/><rect x="2" y="10" width="1" height="1" fill="#5fd3ee"/><rect x="3" y="10" width="1" height="1" fill="#5fd3ee"/><rect x="4" y="10" width="1" height="1" fill="#5fd3ee"/><rect x="5" y="10" width="1" height="1" fill="#3a9cc0"/><rect x="6" y="10" width="1" height="1" fill="#5fd3ee"/><rect x="7" y="10" width="1" height="1" fill="#ffffff"/><rect x="8" y="10" width="1" height="1" fill="#c9f0f8"/><rect x="9" y="10" width="1" height="1" fill="#8fdcec"/><rect x="10" y="10" width="1" height="1" fill="#5fd3ee"/><rect x="11" y="10" width="1" height="1" fill="#2fb8e0"/><rect x="12" y="10" width="1" height="1" fill="#2fb8e0"/><rect x="13" y="10" width="1" height="1" fill="#ffffff"/><rect x="14" y="10" width="1" height="1" fill="#5fd3ee"/><rect x="15" y="10" width="1" height="1" fill="#c9f0f8"/><rect x="0" y="11" width="1" height="1" fill="#8fdcec"/><rect x="1" y="11" width="1" height="1" fill="#2fb8e0"/><rect x="2" y="11" width="1" height="1" fill="#8fdcec"/><rect x="3" y="11" width="1" height="1" fill="#8fdcec"/><rect x="4" y="11" width="1" height="1" fill="#2fb8e0"/><rect x="5" y="11" width="1" height="1" fill="#5fd3ee"/><rect x="6" y="11" width="1" height="1" fill="#3a9cc0"/><rect x="7" y="11" width="1" height="1" fill="#8fdcec"/><rect x="8" y="11" width="1" height="1" fill="#8fdcec"/><rect x="9" y="11" width="1" height="1" fill="#3a9cc0"/><rect x="10" y="11" width="1" height="1" fill="#3a9cc0"/><rect x="11" y="11" width="1" height="1" fill="#3a9cc0"/><rect x="12" y="11" width="1" height="1" fill="#ffffff"/><rect x="13" y="11" width="1" height="1" fill="#c9f0f8"/><rect x="14" y="11" width="1" height="1" fill="#3a9cc0"/><rect x="15" y="11" width="1" height="1" fill="#8fdcec"/><rect x="0" y="12" width="1" height="1" fill="#c9f0f8"/><rect x="1" y="12" width="1" height="1" fill="#c9f0f8"/><rect x="2" y="12" width="1" height="1" fill="#c9f0f8"/><rect x="3" y="12" width="1" height="1" fill="#c9f0f8"/><rect x="4" y="12" width="1" height="1" fill="#ffffff"/><rect x="5" y="12" width="1" height="1" fill="#c9f0f8"/><rect x="6" y="12" width="1" height="1" fill="#3a9cc0"/><rect x="7" y="12" width="1" height="1" fill="#c9f0f8"/><rect x="8" y="12" width="1" height="1" fill="#ffffff"/><rect x="9" y="12" width="1" height="1" fill="#5fd3ee"/><rect x="10" y="12" width="1" height="1" fill="#ffffff"/><rect x="11" y="12" width="1" height="1" fill="#5fd3ee"/><rect x="12" y="12" width="1" height="1" fill="#c9f0f8"/><rect x="13" y="12" width="1" height="1" fill="#5fd3ee"/><rect x="14" y="12" width="1" height="1" fill="#ffffff"/><rect x="15" y="12" width="1" height="1" fill="#2fb8e0"/><rect x="0" y="13" width="1" height="1" fill="#8fdcec"/><rect x="1" y="13" width="1" height="1" fill="#ffffff"/><rect x="2" y="13" width="1" height="1" fill="#ffffff"/><rect x="3" y="13" width="1" height="1" fill="#ffffff"/><rect x="4" y="13" width="1" height="1" fill="#8fdcec"/><rect x="5" y="13" width="1" height="1" fill="#5fd3ee"/><rect x="6" y="13" width="1" height="1" fill="#8fdcec"/><rect x="7" y="13" width="1" height="1" fill="#ffffff"/><rect x="8" y="13" width="1" height="1" fill="#2fb8e0"/><rect x="9" y="13" width="1" height="1" fill="#8fdcec"/><rect x="10" y="13" width="1" height="1" fill="#ffffff"/><rect x="11" y="13" width="1" height="1" fill="#ffffff"/><rect x="12" y="13" width="1" height="1" fill="#5fd3ee"/><rect x="13" y="13" width="1" height="1" fill="#8fdcec"/><rect x="14" y="13" width="1" height="1" fill="#c9f0f8"/><rect x="15" y="13" width="1" height="1" fill="#5fd3ee"/><rect x="0" y="14" width="1" height="1" fill="#3a9cc0"/><rect x="1" y="14" width="1" height="1" fill="#2fb8e0"/><rect x="2" y="14" width="1" height="1" fill="#2fb8e0"/><rect x="3" y="14" width="1" height="1" fill="#8fdcec"/><rect x="4" y="14" width="1" height="1" fill="#2fb8e0"/><rect x="5" y="14" width="1" height="1" fill="#c9f0f8"/><rect x="6" y="14" width="1" height="1" fill="#ffffff"/><rect x="7" y="14" width="1" height="1" fill="#ffffff"/><rect x="8" y="14" width="1" height="1" fill="#c9f0f8"/><rect x="9" y="14" width="1" height="1" fill="#c9f0f8"/><rect x="10" y="14" width="1" height="1" fill="#c9f0f8"/><rect x="11" y="14" width="1" height="1" fill="#c9f0f8"/><rect x="12" y="14" width="1" height="1" fill="#2fb8e0"/><rect x="13" y="14" width="1" height="1" fill="#ffffff"/><rect x="14" y="14" width="1" height="1" fill="#5fd3ee"/><rect x="15" y="14" width="1" height="1" fill="#ffffff"/><rect x="0" y="15" width="1" height="1" fill="#3a9cc0"/><rect x="1" y="15" width="1" height="1" fill="#2fb8e0"/><rect x="2" y="15" width="1" height="1" fill="#3a9cc0"/><rect x="3" y="15" width="1" height="1" fill="#2fb8e0"/><rect x="4" y="15" width="1" height="1" fill="#c9f0f8"/><rect x="5" y="15" width="1" height="1" fill="#3a9cc0"/><rect x="6" y="15" width="1" height="1" fill="#5fd3ee"/><rect x="7" y="15" width="1" height="1" fill="#8fdcec"/><rect x="8" y="15" width="1" height="1" fill="#ffffff"/><rect x="9" y="15" width="1" height="1" fill="#5fd3ee"/><rect x="10" y="15" width="1" height="1" fill="#8fdcec"/><rect x="11" y="15" width="1" height="1" fill="#2fb8e0"/><rect x="12" y="15" width="1" height="1" fill="#5fd3ee"/><rect x="13" y="15" width="1" height="1" fill="#3a9cc0"/><rect x="14" y="15" width="1" height="1" fill="#8fdcec"/><rect x="15" y="15" width="1" height="1" fill="#ffffff"/><rect x="15" y="0" width="1" height="16" fill="#304848"/></g><g transform="scale(1.5)"><path d="M13.2 10.6A6 6 0 1 1 12.4 4.1" fill="none" stroke="#ff0000" stroke-width="3.4"/><path d="M9.8 5.4L15.8 8.2L12.6 11.4z" fill="#ff0000"/><path d="M8 5.4a2.6 2.6 0 0 0 0 5.2z" fill="#fff"/></g></svg>
<div class="a" style="left:1208.00px;top:872.94px;font-size:15px;line-height:15px;color:#e6e6e6;transform-origin:0.00px 0;transform:scaleX(0.8857);">CAC40 index</div>
<div class="a" style="left:1295.75px;top:872.94px;font-size:15px;line-height:15px;color:#f06a6a;transform-origin:0.00px 0;transform:scaleX(0.8780);">-1,23%</div>
<svg class="a" style="left:1176px;top:868px;" width="25" height="24" viewBox="0 0 25 24"><path d="M2.5 2.5Q9 9 19 12" fill="none" stroke="#e03a0c" stroke-width="2.6" stroke-linecap="round"/><path d="M15.5 7.5L23 13L16 17.5z" fill="#d8360c"/><rect x="1" y="11" width="4" height="12" rx="0.6" fill="#dd3c10"/><rect x="7" y="15.5" width="4" height="7.5" rx="0.6" fill="#d23a12"/><rect x="13" y="18.5" width="4" height="4.5" rx="0.6" fill="#cc3612"/><rect x="19" y="21" width="4" height="2" rx="0.6" fill="#c83412"/></svg>
<svg class="a" style="left:1362px;top:875px;" width="14" height="10" viewBox="0 0 14 10"><path d="M1 8.5L7 2L13 8.5" fill="none" stroke="#fff" stroke-width="1.4"/></svg>
<svg class="a" style="left:1385px;top:874px;" width="17" height="12" viewBox="0 0 17 12"><path d="M4 11h10a3 3 0 0 0 0-6a5 5 0 0 0-9-1a3.5 3.5 0 0 0-1 7z" fill="#e6e6e6"/></svg>
<svg class="a" style="left:1411px;top:872px;" width="13" height="17" viewBox="0 0 13 17"><rect x="1" y="4" width="8" height="9" rx="1.5" fill="none" stroke="#fff" stroke-width="1.2"/><path d="M9 7l3-2v7l-3-2" fill="none" stroke="#fff" stroke-width="1.2"/><path d="M3 1h6M3 16h6" stroke="#fff" stroke-width="1"/></svg>
<svg class="a" style="left:1433px;top:873px;" width="17" height="13" viewBox="0 0 17 13"><path d="M1 1l3 3M6 1L3 4M3 4v3" stroke="#fff" stroke-width="1.3"/><rect x="5" y="4" width="10" height="8" fill="none" stroke="#fff" stroke-width="1.2"/><rect x="15" y="6" width="1.5" height="4" fill="#fff"/><rect x="6.5" y="5.5" width="4" height="5" fill="#fff"/></svg>
<svg class="a" style="left:1456px;top:874px;" width="18" height="13" viewBox="0 0 18 13"><path d="M1 4h3l4-3v11l-4-3h-3z" fill="none" stroke="#fff" stroke-width="1.2"/><path d="M10.5 4c1 1.5 1 3.5 0 5M13 2.5c2 2 2 6 0 8M15.5 1c3 3 3 8 0 11" fill="none" stroke="#fff" stroke-width="1.1"/></svg>
<div class="a" style="left:1498.75px;top:865.36px;font-size:12px;line-height:12px;color:#fff;transform-origin:0.00px 0;transform:scaleX(0.8733);">16:35</div>
<div class="a" style="left:1483.25px;top:883.36px;font-size:12px;line-height:12px;color:#fff;transform-origin:0.00px 0;transform:scaleX(0.9532);">07/03/2025</div>
<svg class="a" style="left:1558px;top:872px;" width="26" height="24" viewBox="0 0 26 24"><path d="M1 1h18v13h-10l-4 4v-4h-4z" fill="#fff"/><path d="M4 5h12M4 8h12M4 11h8" stroke="#1c2a2f" stroke-width="1"/><circle cx="16" cy="15.5" r="7" fill="#1c2a2f" stroke="#8a8a8a" stroke-width="1"/><text x="16" y="20" text-anchor="middle" font-family="Liberation Sans" font-weight="bold" font-size="11" fill="#fff">2</text></svg>
<div class="r" style="left:1595px;top:860px;width:1px;height:40px;background:#6a7478;"></div>
</body></html>
